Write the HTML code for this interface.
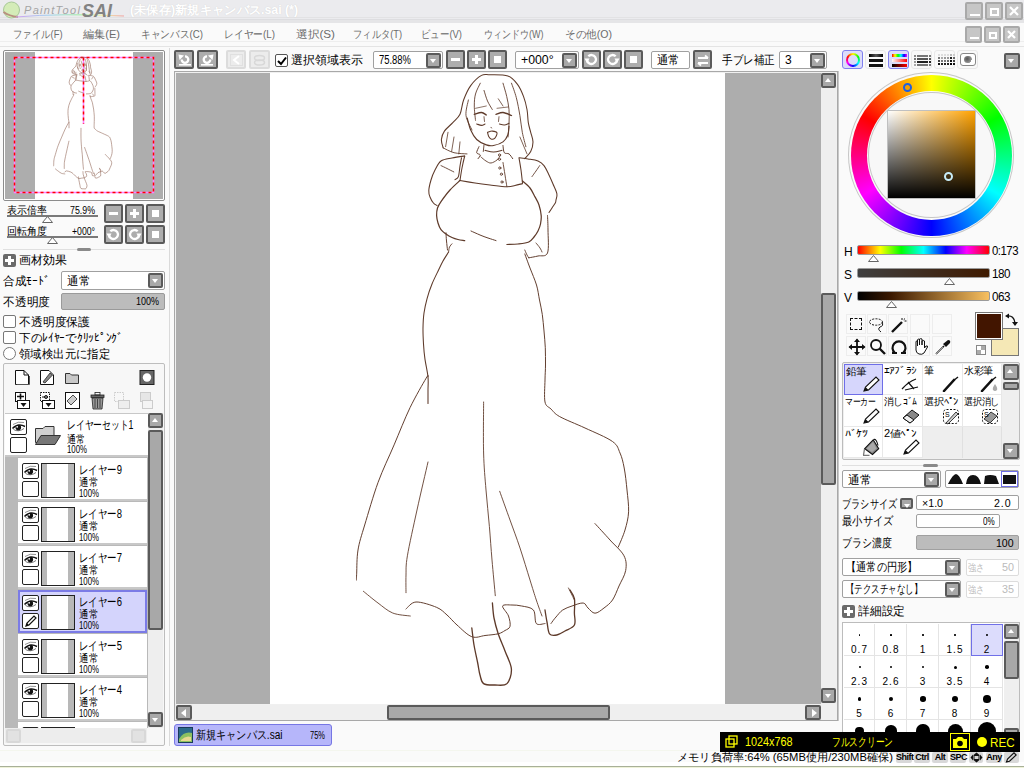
<!DOCTYPE html><html><head><meta charset="utf-8"><style>
*{box-sizing:border-box;margin:0;padding:0}
html,body{width:1024px;height:768px;overflow:hidden;background:#fafafa;font-family:"Liberation Sans",sans-serif;font-size:12px;color:#000}
.a{position:absolute}
.t{position:absolute;white-space:nowrap;line-height:1}
.wb{position:absolute;width:18px;height:18px;background:#c6c6c6;border:2px solid #a9a9a9;border-radius:2px}
.btn{position:absolute;width:19px;height:19px;background:#adadad;border:2px solid #5a5a5a;border-radius:2px}
.dbtn{position:absolute;width:20px;height:19px;background:#ececec;border:2px solid #dcdcdc;border-radius:2px}
.field{position:absolute;background:#fff;border:1px solid #a0a0a0;border-radius:2px}
.dd{position:absolute;width:15px;height:15px;background:#a8a8a8;border:2px solid #5a5a5a;border-radius:2px}
.dd:after{content:"";position:absolute;left:2px;top:4px;border-left:3.5px solid transparent;border-right:3.5px solid transparent;border-top:4px solid #fff}
.cb{position:absolute;width:13px;height:13px;background:#fff;border:1px solid #777;border-radius:2px}
.sb{position:absolute;width:15px;height:15px;background:#a8a8a8;border:2px solid #5a5a5a;border-radius:2px}
.up:after{content:"";position:absolute;left:2px;top:3px;border-left:3.5px solid transparent;border-right:3.5px solid transparent;border-bottom:4px solid #fff}
.dn:after{content:"";position:absolute;left:2px;top:4px;border-left:3.5px solid transparent;border-right:3.5px solid transparent;border-top:4px solid #fff}
.box{position:absolute;width:17px;height:16px;background:#fff;border:1px solid #222;border-radius:2px}
.thumb{position:absolute;width:34px;height:35px;background:#fff;border:1px solid #222}
.thumb:before{content:"";position:absolute;left:0;top:0;width:5px;height:33px;background:#b8b8b8}
.thumb:after{content:"";position:absolute;right:0;top:0;width:6px;height:33px;background:#b8b8b8}
.lrow{position:absolute;left:18px;width:129px;height:43px;background:#fff}
.s10{font-size:10px}
.s11{font-size:11px}
.plus{position:absolute;width:13px;height:13px;background:#6a6a6a;border-radius:2px}
.plus:before{content:"";position:absolute;left:5px;top:2px;width:3px;height:9px;background:#fff}
.plus:after{content:"";position:absolute;left:2px;top:5px;width:9px;height:3px;background:#fff}
</style></head><body><div class="a" style="left:0;top:0;width:1024px;height:23px;background:#ebebee"></div><div class="a" style="left:0;top:17px;width:1024px;height:1px;background:#e2e2e4"></div><div class="a" style="left:0;top:19px;width:1024px;height:4px;background:#e5e5e7;border-top:1px solid #dddde0"></div><svg class="a" style="left:0;top:0" width="130" height="22"><defs><linearGradient id="rb" x1="0" x2="1"><stop offset="0" stop-color="#d0a0f0"/><stop offset="0.3" stop-color="#a0d0f0"/><stop offset="0.6" stop-color="#a0f0a0"/><stop offset="0.8" stop-color="#f0f0a0"/><stop offset="1" stop-color="#f0a0a0"/></linearGradient></defs><circle cx="11.5" cy="10" r="8" fill="#d4ecb8" stroke="#a8c898" stroke-width="1"/><path d="M3.5 12 Q9 16 18 17" stroke="#b89080" stroke-width="2" fill="none"/><path d="M16 17 Q60 13 124 16" stroke="url(#rb)" stroke-width="1" fill="none"/></svg><div class="t" style="left:24px;top:5px;font-size:11px;color:#a4a4a4;font-style:italic;letter-spacing:1.3px">PaintTool</div><div class="t" style="left:82px;top:2px;font-size:18px;color:#828282;font-style:italic;font-weight:bold">SAI</div><div class="t" style="left:130px;top:4px;font-size:12px;color:#fff;font-weight:bold;text-shadow:0 0 1px #ccc;--tw:168;transform:scaleX(1.024);transform-origin:0 0">(未保存)新規キャンバス.sai (*)</div><div class="wb" style="left:965px;top:2px;width:18px;height:18px"><div class="a" style="left:3px;top:10px;width:10px;height:2px;background:#fff"></div></div><div class="wb" style="left:985px;top:2px;width:18px;height:18px"><div class="a" style="left:3px;top:4px;width:9px;height:8px;border:2px solid #fff"></div></div><div class="wb" style="left:1005px;top:2px;width:18px;height:18px"><svg class="a" style="left:1px;top:1px" width="12" height="12"><path d="M2 2 L10 10 M10 2 L2 10" stroke="#fff" stroke-width="2.2"/></svg></div><div class="a" style="left:0;top:23px;width:1024px;height:24px;background:#fafafa;border-bottom:1px solid #e4e4e4"></div><div class="a" style="left:0;top:41px;width:1024px;height:1px;background:#eeeeee"></div><div class="t" style="left:13px;top:29px;color:#6c6c6c;font-size:11px;--tw:49.5;transform:scaleX(0.853);transform-origin:0 0">ファイル(F)</div><div class="t" style="left:83px;top:29px;color:#6c6c6c;font-size:11px;--tw:37;transform:scaleX(1.009);transform-origin:0 0">編集(E)</div><div class="t" style="left:141px;top:29px;color:#6c6c6c;font-size:11px;--tw:62;transform:scaleX(0.882);transform-origin:0 0">キャンバス(C)</div><div class="t" style="left:224px;top:29px;color:#6c6c6c;font-size:11px;--tw:51;transform:scaleX(0.888);transform-origin:0 0">レイヤー(L)</div><div class="t" style="left:296px;top:29px;color:#6c6c6c;font-size:11px;--tw:39;transform:scaleX(1.063);transform-origin:0 0">選択(S)</div><div class="t" style="left:353px;top:29px;color:#6c6c6c;font-size:11px;--tw:49;transform:scaleX(0.844);transform-origin:0 0">フィルタ(T)</div><div class="t" style="left:421px;top:29px;color:#6c6c6c;font-size:11px;--tw:41;transform:scaleX(0.860);transform-origin:0 0">ビュー(V)</div><div class="t" style="left:484px;top:29px;color:#6c6c6c;font-size:11px;--tw:59.5;transform:scaleX(0.818);transform-origin:0 0">ウィンドウ(W)</div><div class="t" style="left:565px;top:29px;color:#6c6c6c;font-size:11px;--tw:47;transform:scaleX(0.961);transform-origin:0 0">その他(O)</div><div class="wb" style="left:965px;top:26px;width:17px;height:17px"><div class="a" style="left:3px;top:9px;width:9px;height:2px;background:#fff"></div></div><div class="wb" style="left:984px;top:26px;width:17px;height:17px"><div class="a" style="left:3px;top:4px;width:8px;height:7px;border:2px solid #fff"></div></div><div class="wb" style="left:1003px;top:26px;width:17px;height:17px"><svg class="a" style="left:1px;top:1px" width="11" height="11"><path d="M2 2 L9 9 M9 2 L2 9" stroke="#fff" stroke-width="2.2"/></svg></div><div class="a" style="left:169px;top:48px;width:1px;height:698px;background:#dadada"></div><div class="a" style="left:3px;top:50px;width:162px;height:151px;border:1px solid #8c8c8c;border-radius:2px;background:#fff"></div><div class="a" style="left:5px;top:52px;width:158px;height:147px;background:#adadad"></div><div class="a" style="left:35px;top:52px;width:98px;height:147px;background:#fff"></div><svg class="a" style="left:0;top:0" width="170" height="205"><g fill="none" stroke-width="1.5"><path d="M14.5 57.5 H153.5 V192.5 H14.5Z M83.5 57.5 V124" stroke="#ff80ff"/><path d="M14.5 57.5 H153.5 V192.5 H14.5Z M83.5 57.5 V124" stroke="#ff0000" stroke-dasharray="3 3"/></g></svg><svg class="a" style="left:4px;top:51px" width="160" height="149" ><g fill="none" stroke="#8a5a4a" stroke-width="0.6" opacity="0.9"><path d="M68.3 22.1 C68.2 21.8 67.9 20.9 67.9 20.3 C68.0 19.7 68.2 19.1 68.6 18.5 C69.0 17.9 69.8 17.3 70.4 16.7 C70.9 16.1 71.5 15.7 71.9 14.9 C72.3 14.1 72.3 12.8 72.7 11.8 C73.1 10.8 73.6 9.6 74.2 8.7 C74.9 7.8 75.9 6.9 76.6 6.5 C77.2 6.1 77.4 6.4 78.4 6.4 C79.3 6.4 81.2 6.3 82.2 6.6 C83.2 7.0 83.7 7.7 84.3 8.5 C84.9 9.2 85.3 10.1 85.6 11.0 C85.9 11.9 86.2 12.9 86.4 13.9 C86.5 14.8 86.5 15.9 86.6 16.7 C86.8 17.5 87.0 18.1 87.2 18.8 C87.3 19.5 87.6 20.2 87.6 20.8 C87.6 21.5 87.4 22.3 87.2 22.9 C86.9 23.5 86.1 24.2 85.9 24.5"/><path d="M69.3 18.8 L68.8 21.9"/><path d="M70.6 19.8 L70.1 22.9"/><path d="M71.9 20.8 L71.7 23.4"/><path d="M68.3 22.1 C68.7 22.3 69.8 23.0 70.6 23.2 C71.5 23.4 73.0 23.4 73.4 23.4"/><path d="M76.3 8.2 C76.1 8.6 75.5 9.7 75.3 10.5 C75.0 11.3 75.0 12.2 75.0 13.1 C75.0 14.1 75.2 15.7 75.3 16.2"/><path d="M73.7 11.8 C73.6 12.4 73.1 14.1 73.2 15.2 C73.3 16.2 74.3 17.8 74.5 18.3"/><path d="M77.1 9.7 C77.2 10.1 77.5 11.3 77.8 12.0 C78.1 12.7 78.7 13.6 78.9 13.9"/><path d="M81.2 8.2 C81.3 8.7 81.8 10.1 82.0 11.0 C82.2 12.0 82.4 12.9 82.5 13.9 C82.6 14.9 82.5 16.0 82.5 17.0 C82.4 18.0 82.3 19.3 82.3 19.8"/><path d="M83.0 8.2 C83.2 8.7 83.7 10.1 84.0 11.3 C84.4 12.5 84.6 13.9 84.8 15.2 C85.0 16.4 85.1 17.7 85.3 18.8 C85.6 19.9 86.0 21.4 86.1 21.9"/><path d="M80.2 11.6 L81.2 13.1"/><path d="M84.8 19.8 L86.4 23.4"/><path d="M73.5 15.7 C73.6 16.1 73.9 17.5 74.2 18.3 C74.6 19.0 75.0 19.8 75.5 20.3 C76.1 20.9 77.0 21.3 77.6 21.5 C78.2 21.7 78.5 21.7 79.1 21.6 C79.7 21.5 80.7 21.2 81.2 20.8 C81.7 20.5 82.0 19.8 82.2 19.3 C82.5 18.7 82.4 17.8 82.5 17.5"/><path d="M75.0 14.9 C75.3 14.8 76.1 14.5 76.6 14.5 C77.0 14.5 77.4 15.0 77.6 15.0"/><path d="M75.5 17.0 C75.7 17.0 76.3 17.3 76.6 17.3 C76.9 17.3 77.2 17.0 77.3 17.0"/><path d="M79.7 14.9 C79.9 14.8 80.6 14.5 81.2 14.5 C81.7 14.6 82.7 15.0 83.0 15.2"/><path d="M80.4 17.0 C80.6 17.0 81.1 17.2 81.5 17.2 C81.8 17.2 82.3 16.9 82.5 16.8"/><path d="M75.3 13.6 L77.6 13.1"/><path d="M79.9 13.6 L82.3 13.3"/><path d="M77.1 15.4 L77.2 16.4"/><path d="M80.3 15.4 L80.2 16.4"/><path d="M77.8 18.8 C78.0 18.7 78.5 18.5 78.9 18.5 C79.2 18.5 79.8 18.6 79.9 18.9 C80.0 19.2 79.6 19.8 79.4 20.1 C79.2 20.3 78.8 20.3 78.6 20.2 C78.4 20.2 78.2 19.9 78.1 19.7 C78.0 19.4 77.9 18.9 77.8 18.8"/><path d="M78.6 17.7 L78.7 17.8"/><path d="M77.1 21.5 L76.9 22.9"/><path d="M76.0 21.9 C75.9 22.1 75.5 22.9 75.5 23.2 C75.6 23.5 76.2 23.4 76.3 23.7 C76.3 23.9 75.9 24.3 75.8 24.5"/><path d="M77.3 22.6 C77.6 22.7 78.5 23.0 79.1 23.0 C79.7 23.0 80.7 22.7 81.0 22.6"/><path d="M81.2 21.6 C81.2 21.9 81.2 22.9 81.5 23.2 C81.7 23.5 82.2 23.2 82.5 23.4 C82.8 23.6 83.1 24.3 83.3 24.5"/><path d="M76.4 24.1 C76.6 24.2 77.2 24.7 77.5 25.0 C77.9 25.2 78.2 25.4 78.6 25.4 C79.0 25.3 79.6 25.0 79.9 24.7 C80.2 24.5 80.4 24.0 80.5 23.9"/><path d="M72.9 23.9 C72.5 23.9 71.1 24.1 70.2 24.3 C69.3 24.5 68.4 24.5 67.8 25.0 C67.2 25.4 66.9 26.2 66.5 26.9 C66.2 27.6 65.9 28.3 65.7 29.0 C65.5 29.8 65.2 30.7 65.2 31.3 C65.2 31.9 65.3 32.3 65.5 32.7 C65.6 33.2 65.9 33.7 66.2 34.0 C66.4 34.3 66.8 34.4 67.0 34.5"/><path d="M67.8 25.9 C68.0 26.0 68.7 26.3 69.1 26.6 C69.6 26.8 70.3 27.2 70.6 27.3"/><path d="M72.2 24.3 C72.2 24.6 72.0 25.4 71.9 26.0 C71.8 26.7 71.8 27.8 71.6 28.3 C71.4 28.8 71.0 28.9 70.8 29.0"/><path d="M72.9 23.9 C72.8 24.3 72.5 25.6 72.4 26.5 C72.2 27.3 72.0 28.7 71.9 29.2"/><path d="M71.9 29.2 C72.5 29.2 74.1 29.5 75.2 29.7 C76.2 29.9 77.2 30.0 78.4 30.1 C79.5 30.3 81.1 30.5 82.0 30.5 C82.9 30.5 83.2 30.3 83.8 30.2 C84.3 30.1 85.1 29.9 85.4 29.8"/><path d="M84.6 24.3 C84.7 24.7 84.9 26.0 85.1 26.9 C85.2 27.8 85.3 29.2 85.4 29.7"/><path d="M81.2 25.3 C81.3 25.7 81.5 27.1 81.6 28.0 C81.8 28.8 82.0 30.1 82.0 30.5"/><path d="M84.7 24.3 C85.0 24.3 85.9 24.4 86.6 24.5 C87.2 24.6 88.1 24.7 88.7 25.0 C89.3 25.2 89.6 25.4 90.0 25.9 C90.4 26.4 90.8 27.3 91.1 28.0 C91.4 28.6 91.7 29.2 92.0 29.9 C92.2 30.6 92.7 31.4 92.8 32.0 C92.9 32.6 92.7 33.0 92.6 33.4 C92.5 33.7 92.6 33.7 92.4 34.0 C92.3 34.3 92.0 34.7 91.7 35.1 C91.5 35.4 91.2 35.9 91.1 36.0"/><path d="M87.4 28.3 C87.6 28.1 88.0 27.5 88.3 27.1 C88.6 26.7 89.0 26.1 89.1 25.9"/><path d="M71.9 29.2 C71.6 29.5 70.5 30.4 69.8 31.2 C69.1 32.0 68.3 33.1 67.8 33.7 C67.4 34.3 67.2 34.6 67.1 35.1 C66.9 35.6 66.9 36.2 66.9 36.7 C66.9 37.3 67.0 37.8 67.2 38.3 C67.3 38.8 67.5 39.4 67.8 39.8 C68.1 40.1 68.5 40.4 68.9 40.7 C69.3 41.0 69.8 41.2 70.2 41.4 C70.6 41.6 71.0 41.8 71.5 41.9 C71.9 42.0 72.7 42.1 72.9 42.1"/><path d="M74.3 40.0 C74.6 40.2 75.6 40.6 76.2 40.9 C76.8 41.1 77.4 41.3 78.0 41.5 C78.5 41.7 79.4 42.0 79.7 42.1"/><path d="M85.4 29.3 C85.7 29.5 86.6 30.2 87.0 30.8 C87.4 31.3 87.8 32.1 88.1 32.7 C88.4 33.3 88.7 33.8 88.9 34.4 C89.2 35.1 89.4 36.0 89.4 36.7 C89.5 37.4 89.4 38.0 89.3 38.5 C89.1 39.1 89.0 39.6 88.7 40.0 C88.5 40.5 88.2 40.9 87.9 41.3 C87.5 41.7 87.3 42.1 86.7 42.4 C86.2 42.7 85.2 42.7 84.4 42.8 C83.6 42.9 82.4 42.9 82.0 42.9"/><path d="M68.9 40.4 C68.9 40.7 69.0 41.6 69.0 42.2 C69.1 42.8 69.2 43.8 69.2 44.1"/><path d="M70.2 42.8 C70.1 42.9 69.8 43.2 69.7 43.5 C69.5 43.8 69.5 44.4 69.5 44.6"/><path d="M90.8 36.7 C90.8 37.2 90.9 38.5 90.9 39.8 C90.9 41.2 91.1 43.8 90.8 44.8 C90.4 45.7 89.4 45.2 88.7 45.4 C88.0 45.6 87.1 45.7 86.7 45.8"/><path d="M88.3 42.6 C88.4 42.8 88.9 43.4 89.2 43.7 C89.4 44.0 89.5 44.4 89.6 44.6"/><path d="M85.9 44.1 C85.9 44.3 86.1 44.7 86.2 45.0 C86.4 45.3 86.6 45.7 86.7 45.8"/><path d="M69.5 44.6 C69.3 44.9 68.6 45.9 68.3 46.5 C67.9 47.1 67.8 47.5 67.4 48.3 C67.0 49.1 66.3 50.4 65.9 51.4 C65.5 52.5 65.1 53.6 64.8 54.6 C64.5 55.7 64.3 56.6 64.2 57.7 C64.0 58.7 64.0 59.8 64.0 60.9 C63.9 62.0 64.0 63.2 64.1 64.4 C64.1 65.5 64.2 66.5 64.4 67.7 C64.5 68.9 64.9 70.4 65.0 71.5 C65.1 72.6 65.0 73.3 65.0 74.3 C65.0 75.2 65.0 76.7 65.0 77.2"/><path d="M65.0 71.5 C65.0 71.5 65.3 70.6 64.6 71.7 C64.0 72.8 62.3 75.6 61.2 78.0 C60.0 80.4 58.9 83.4 57.7 86.1 C56.6 88.8 55.3 91.3 54.3 94.2 C53.2 97.0 52.1 100.9 51.4 103.4 C50.7 105.8 50.2 107.0 50.0 108.7 C49.7 110.5 49.7 112.6 49.7 113.7 C49.6 114.8 49.6 115.0 49.6 115.2"/><path d="M85.9 45.0 C86.1 45.5 86.6 46.9 87.0 48.0 C87.4 49.1 88.1 50.5 88.4 51.7 C88.7 52.8 88.8 53.8 89.0 54.9 C89.3 56.0 89.5 56.9 89.6 58.0 C89.8 59.1 89.9 60.4 90.0 61.6 C90.1 62.8 90.2 63.9 90.3 65.2 C90.3 66.4 90.3 67.7 90.3 68.9 C90.3 70.1 90.2 70.8 90.2 72.1 C90.2 73.5 90.0 75.8 90.2 76.9 C90.4 77.9 91.0 77.8 91.5 78.4 C92.1 78.9 92.2 79.3 93.4 80.0 C94.6 80.7 97.0 81.6 98.8 82.5 C100.7 83.4 103.5 84.5 104.8 85.4 C106.0 86.3 106.0 86.9 106.4 87.8 C106.8 88.8 107.0 89.7 107.3 91.1 C107.5 92.4 107.7 94.2 107.9 95.8 C108.1 97.4 108.3 99.1 108.2 100.5 C108.2 101.9 107.8 103.2 107.5 104.4 C107.1 105.7 106.3 107.5 106.0 108.1"/><path d="M65.0 89.8 C64.6 91.5 63.4 96.8 62.7 100.1 C61.9 103.5 61.0 107.7 60.6 110.0 C60.2 112.3 60.3 112.8 60.3 114.1 C60.2 115.4 60.3 117.3 60.3 117.9"/><path d="M77.0 76.9 C77.0 78.7 76.9 84.7 77.0 87.8 C77.1 91.0 77.3 93.2 77.5 95.8 C77.7 98.5 78.0 101.2 78.3 103.7 C78.5 106.2 78.6 108.4 78.8 110.9 C79.0 113.4 79.4 117.3 79.5 118.6"/><path d="M80.5 96.1 C80.8 97.1 82.0 100.2 82.7 102.3 C83.4 104.3 84.1 106.2 84.8 108.3 C85.6 110.5 86.4 113.3 87.0 115.2 C87.6 117.1 87.9 118.2 88.4 119.5 C88.8 120.8 89.4 122.4 89.6 123.0"/><path d="M101.0 103.1 C101.5 103.6 103.2 105.4 104.2 106.6 C105.3 107.7 106.7 108.9 107.2 110.0 C107.8 111.1 107.8 112.0 107.6 113.1 C107.4 114.2 106.6 115.4 106.2 116.5 C105.7 117.6 105.3 118.7 104.8 119.5 C104.2 120.3 103.6 120.8 102.9 121.2 C102.3 121.7 101.6 122.4 101.0 122.4 C100.4 122.4 99.9 121.6 99.5 121.2 C99.1 120.9 99.0 120.2 98.5 120.2 C97.9 120.1 96.8 120.5 96.0 120.8 C95.3 121.1 94.6 121.3 94.0 121.7 C93.5 122.1 93.0 122.7 92.6 123.2 C92.2 123.7 91.7 124.3 91.5 124.6"/><path d="M95.3 116.9 C95.4 117.2 95.8 118.0 96.0 118.4 C96.3 118.9 96.5 119.3 96.6 119.5"/><path d="M51.1 117.6 C51.6 118.1 53.2 119.4 54.3 120.2 C55.3 120.9 56.3 121.8 57.4 122.3 C58.6 122.8 60.6 122.8 61.2 123.0"/><path d="M60.3 121.4 C60.7 121.2 61.3 120.0 62.4 119.9 C63.5 119.9 65.8 120.6 66.9 121.1 C68.0 121.6 68.4 122.1 69.1 122.7 C69.9 123.4 70.4 124.1 71.3 124.9 C72.2 125.7 73.5 127.0 74.5 127.4 C75.5 127.8 76.4 127.3 77.3 127.2 C78.3 127.0 79.4 127.0 80.2 126.8 C80.9 126.6 81.2 126.3 81.6 126.1 C82.0 125.8 82.6 125.7 82.7 125.2 C82.8 124.7 82.6 123.7 82.4 123.0 C82.1 122.2 81.0 121.2 81.1 120.8 C81.2 120.4 82.4 120.6 83.1 120.6 C83.8 120.6 84.4 120.6 85.2 120.8 C86.0 121.0 87.2 121.0 87.7 121.7 C88.3 122.3 87.9 124.1 88.4 124.6 C88.8 125.1 89.9 124.6 90.2 124.6"/><path d="M74.5 125.5 C74.5 126.1 74.7 127.9 74.9 129.2 C75.2 130.5 75.5 132.0 75.7 133.1 C76.0 134.2 76.0 134.9 76.2 135.7 C76.4 136.4 76.5 137.2 77.0 137.5 C77.5 137.9 78.6 137.8 79.5 137.8 C80.3 137.8 81.5 138.1 82.0 137.5 C82.6 136.9 83.1 135.5 83.0 134.4 C82.9 133.2 82.1 131.8 81.6 130.5 C81.1 129.2 80.5 128.0 80.2 126.8 C79.8 125.6 79.5 124.5 79.2 123.4 C79.0 122.3 79.0 120.7 78.9 120.2"/><path d="M95.6 117.4 C95.8 117.7 96.4 118.4 96.6 119.2 C96.7 120.0 96.6 121.4 96.6 122.3 C96.6 123.3 96.9 124.2 96.6 124.9 C96.2 125.5 95.2 125.8 94.5 126.2 C93.9 126.5 93.3 126.9 92.8 127.0 C92.2 127.1 91.6 127.3 91.2 126.8 C90.8 126.3 90.8 125.1 90.7 124.2 C90.5 123.4 90.3 122.1 90.2 121.7"/></g></svg><div class="t" style="left:7px;top:205px;font-size:11px;--tw:40;transform:scaleX(0.909);transform-origin:0 0">表示倍率</div><div class="t" style="left:70px;top:205px;font-size:11px;--tw:25;transform:scaleX(0.801);transform-origin:0 0">75.9%</div><div class="a" style="left:7px;top:215px;width:91px;height:2px;background:#7a7a7a"></div><svg class="a" style="left:42px;top:216px" width="11" height="7"><path d="M0.5 6.5 L5.5 0.5 L10.5 6.5Z" fill="#fff" stroke="#666"/></svg><div class="t" style="left:7px;top:226px;font-size:11px;--tw:40;transform:scaleX(0.909);transform-origin:0 0">回転角度</div><div class="t" style="left:72px;top:226px;font-size:11px;--tw:23;transform:scaleX(0.788);transform-origin:0 0">+000°</div><div class="a" style="left:7px;top:236px;width:91px;height:2px;background:#7a7a7a"></div><svg class="a" style="left:47px;top:237px" width="11" height="7"><path d="M0.5 6.5 L5.5 0.5 L10.5 6.5Z" fill="#fff" stroke="#666"/></svg><div class="btn" style="left:104px;top:204px;width:19px;height:19px"><div class="a" style="left:3px;top:6px;width:9px;height:3px;background:#fff"></div></div><div class="btn" style="left:125px;top:204px;width:19px;height:19px"><div class="a" style="left:3px;top:6px;width:9px;height:3px;background:#fff"></div><div class="a" style="left:6px;top:3px;width:3px;height:9px;background:#fff"></div></div><div class="btn" style="left:146px;top:204px;width:19px;height:19px"><div class="a" style="left:4px;top:4px;width:7px;height:7px;background:#fff"></div></div><div class="btn" style="left:104px;top:225px;width:19px;height:19px"><svg class="a" style="left:0;top:0" width="15" height="15"><path d="M4.3 4.3 A4.5 4.5 0 1 1 3 8" fill="none" stroke="#fff" stroke-width="2.3"/><path d="M0.5 6.5 L5.5 6.5 L3 11Z" fill="#fff"/></svg></div><div class="btn" style="left:125px;top:225px;width:19px;height:19px"><svg class="a" style="left:0;top:0" width="15" height="15"><path d="M10.7 4.3 A4.5 4.5 0 1 0 12 8" fill="none" stroke="#fff" stroke-width="2.3"/><path d="M14.5 6.5 L9.5 6.5 L12 11Z" fill="#fff"/></svg></div><div class="btn" style="left:146px;top:225px;width:19px;height:19px"><div class="a" style="left:4px;top:4px;width:7px;height:7px;background:#fff"></div></div><div class="a" style="left:3px;top:249px;width:162px;height:1px;background:#e0e0e0"></div><div class="a" style="left:77px;top:248px;width:14px;height:3px;background:#8a8a8a;border-radius:2px"></div><div class="plus" style="left:3px;top:254px"></div><div class="t" style="left:19px;top:254px;font-size:12px;--tw:48;transform:scaleX(1.000);transform-origin:0 0">画材効果</div><div class="t" style="left:3px;top:275px;font-size:12px;--tw:46.5;transform:scaleX(0.969);transform-origin:0 0">合成ﾓｰﾄﾞ</div><div class="field" style="left:61px;top:271px;width:104px;height:19px"></div><div class="t" style="left:67px;top:275px;font-size:12px;--tw:23;transform:scaleX(0.958);transform-origin:0 0">通常</div><div class="dd" style="left:148px;top:273px"></div><div class="t" style="left:3px;top:296px;font-size:12px;--tw:47;transform:scaleX(0.979);transform-origin:0 0">不透明度</div><div class="field" style="left:61px;top:293px;width:104px;height:17px;background:#bcbcbc;border-color:#9a9a9a"></div><div class="t" style="left:136px;top:296px;font-size:11px;--tw:23;transform:scaleX(0.817);transform-origin:0 0">100%</div><div class="cb" style="left:3px;top:315px"></div><div class="t" style="left:19px;top:316px;font-size:12px;--tw:71;transform:scaleX(0.986);transform-origin:0 0">不透明度保護</div><div class="cb" style="left:3px;top:331px"></div><div class="t" style="left:19px;top:332px;font-size:12px;--tw:104;transform:scaleX(0.963);transform-origin:0 0">下のﾚｲﾔｰでｸﾘｯﾋﾟﾝｸﾞ</div><div class="cb" style="left:3px;top:347px;border-radius:7px"></div><div class="t" style="left:19px;top:348px;font-size:12px;--tw:91;transform:scaleX(0.948);transform-origin:0 0">領域検出元に指定</div><div class="a" style="left:3px;top:363px;width:162px;height:383px;border:1px solid #bdbdbd;background:#f7f7f7;border-radius:2px"></div><svg class="a" style="left:14px;top:369px" width="16" height="17"><path d="M1.5 1.5 H10 L14.5 6 V15.5 H1.5Z" fill="#fff" stroke="#111"/><path d="M10 1.5 V6 H14.5" fill="none" stroke="#111"/><path d="M2.5 15.5 H15.5 V7" stroke="#555" fill="none"/></svg><svg class="a" style="left:39px;top:369px" width="16" height="17"><path d="M1.5 1.5 H10 L14.5 6 V15.5 H1.5Z" fill="#fff" stroke="#111"/><path d="M4 13 L11 4 L13.5 6 L6 14Z" fill="#888" stroke="#222" stroke-width="0.8"/></svg><svg class="a" style="left:64px;top:369px" width="16" height="17"><path d="M1.5 4.5 H6 L7.5 6 H14.5 V14.5 H1.5Z" fill="#c8c8c8" stroke="#333"/></svg><svg class="a" style="left:139px;top:369px" width="16" height="17"><rect x="1" y="1.5" width="14" height="14" fill="#666" stroke="#222"/><circle cx="8" cy="8.5" r="4.2" fill="#fff"/></svg><svg class="a" style="left:14px;top:391px" width="17" height="19"><rect x="1.5" y="1.5" width="10" height="9" fill="#fff" stroke="#111"/><path d="M3 5.5 H10 M6.5 2.5 V8.5" stroke="#111" stroke-width="1.6"/><rect x="3.5" y="9.5" width="12" height="8" fill="#fff" stroke="#111"/><path d="M6.5 12 H12.5 L9.5 16Z" fill="#111"/></svg><svg class="a" style="left:39px;top:391px" width="17" height="19"><rect x="1.5" y="1.5" width="9" height="9" fill="#fff" stroke="#111" stroke-dasharray="1.5 1"/><path d="M3 6 H9" stroke="#111"/><circle cx="7" cy="6" r="1.5" fill="none" stroke="#111"/><rect x="3.5" y="9.5" width="12" height="8" fill="#fff" stroke="#111"/><path d="M6.5 12 H12.5 L9.5 16Z" fill="#111"/></svg><svg class="a" style="left:64px;top:391px" width="17" height="19"><rect x="1.5" y="1.5" width="14" height="16" fill="#fff" stroke="#111"/><path d="M3 10 L9 4 L13 8 L7 14Z" fill="#ccc" stroke="#222" stroke-width="0.8"/></svg><svg class="a" style="left:89px;top:391px" width="17" height="19"><rect x="2" y="4" width="13" height="2.5" fill="#666" stroke="#222" stroke-width="0.8"/><rect x="6" y="1.5" width="5" height="2.5" fill="none" stroke="#222" stroke-width="0.8"/><path d="M3 7 H14 L13 18 H4Z" fill="#999" stroke="#222" stroke-width="0.8"/><path d="M6 8 V17 M8.5 8 V17 M11 8 V17" stroke="#444"/></svg><svg class="a" style="left:113px;top:391px" width="18" height="19"><rect x="1.5" y="1.5" width="9" height="9" fill="none" stroke="#ccc" stroke-dasharray="1.5 1"/><rect x="5.5" y="9.5" width="11" height="8" fill="#eee" stroke="#ccc"/></svg><svg class="a" style="left:137px;top:391px" width="18" height="19"><rect x="3.5" y="1.5" width="10" height="9" fill="#e6e6e6" stroke="#ccc"/><rect x="5.5" y="9.5" width="10" height="8" fill="#f4f4f4" stroke="#ccc"/></svg><div class="a" style="left:5px;top:413px;width:143px;height:315px;background:#b9b9b9;overflow:hidden" id="llist"><div class="a" style="left:0;top:0;width:143px;height:44px;background:#fff;border-bottom:2px solid #c8c8c8;border-top:1px solid #c8c8c8"></div><div class="box" style="left:5px;top:6px"><svg width="15" height="14" viewBox="0 0 15 14" style="position:absolute;left:0;top:0"><path d="M2 4.5 Q7 1 13 2.5" fill="none" stroke="#777" stroke-width="0.8"/><path d="M1.5 8.5 Q7 2.8 14 6.5" fill="none" stroke="#111" stroke-width="1.5"/><path d="M2.5 9.5 Q7.5 12.5 13 8.5" fill="none" stroke="#555" stroke-width="0.8"/><circle cx="7.3" cy="7.6" r="2.8" fill="#111"/><circle cx="6.2" cy="6.8" r="0.9" fill="#fff"/></svg></div><div class="box" style="left:5px;top:24px"></div><svg class="a" style="left:29px;top:12px" width="28" height="21"><path d="M1.5 3.5 H9 L11 1.5 H20 V17.5 H1.5Z" fill="#d0d0d0" stroke="#333"/><path d="M1.5 19.5 L7 10.5 H26.5 L21 19.5Z" fill="#777" stroke="#333"/></svg><div class="t" style="left:62px;top:6px;font-size:12px;--tw:66.5;transform:scaleX(0.733);transform-origin:0 0">レイヤーセット1</div><div class="t" style="left:62px;top:21px;font-size:11px;--tw:18;transform:scaleX(0.818);transform-origin:0 0">通常</div><div class="t" style="left:62px;top:32px;font-size:10px;--tw:20;transform:scaleX(0.782);transform-origin:0 0">100%</div><div class="a" style="left:13px;top:45px;width:129px;height:43px;background:#fff;border-bottom:2px solid #c8c8c8"></div><div class="box" style="left:17px;top:50px"><svg width="15" height="14" viewBox="0 0 15 14" style="position:absolute;left:0;top:0"><path d="M2 4.5 Q7 1 13 2.5" fill="none" stroke="#777" stroke-width="0.8"/><path d="M1.5 8.5 Q7 2.8 14 6.5" fill="none" stroke="#111" stroke-width="1.5"/><path d="M2.5 9.5 Q7.5 12.5 13 8.5" fill="none" stroke="#555" stroke-width="0.8"/><circle cx="7.3" cy="7.6" r="2.8" fill="#111"/><circle cx="6.2" cy="6.8" r="0.9" fill="#fff"/></svg></div><div class="box" style="left:17px;top:68px"></div><div class="thumb" style="left:36px;top:50px"></div><div class="t" style="left:74px;top:51px;font-size:12px;--tw:43;transform:scaleX(0.786);transform-origin:0 0">レイヤー9</div><div class="t" style="left:74px;top:64px;font-size:11px;--tw:19;transform:scaleX(0.864);transform-origin:0 0">通常</div><div class="t" style="left:74px;top:76px;font-size:10px;--tw:20;transform:scaleX(0.782);transform-origin:0 0">100%</div><div class="a" style="left:13px;top:89px;width:129px;height:43px;background:#fff;border-bottom:2px solid #c8c8c8"></div><div class="box" style="left:17px;top:94px"><svg width="15" height="14" viewBox="0 0 15 14" style="position:absolute;left:0;top:0"><path d="M2 4.5 Q7 1 13 2.5" fill="none" stroke="#777" stroke-width="0.8"/><path d="M1.5 8.5 Q7 2.8 14 6.5" fill="none" stroke="#111" stroke-width="1.5"/><path d="M2.5 9.5 Q7.5 12.5 13 8.5" fill="none" stroke="#555" stroke-width="0.8"/><circle cx="7.3" cy="7.6" r="2.8" fill="#111"/><circle cx="6.2" cy="6.8" r="0.9" fill="#fff"/></svg></div><div class="box" style="left:17px;top:112px"></div><div class="thumb" style="left:36px;top:94px"></div><div class="t" style="left:74px;top:95px;font-size:12px;--tw:43;transform:scaleX(0.786);transform-origin:0 0">レイヤー8</div><div class="t" style="left:74px;top:108px;font-size:11px;--tw:19;transform:scaleX(0.864);transform-origin:0 0">通常</div><div class="t" style="left:74px;top:120px;font-size:10px;--tw:20;transform:scaleX(0.782);transform-origin:0 0">100%</div><div class="a" style="left:13px;top:133px;width:129px;height:43px;background:#fff;border-bottom:2px solid #c8c8c8"></div><div class="box" style="left:17px;top:138px"><svg width="15" height="14" viewBox="0 0 15 14" style="position:absolute;left:0;top:0"><path d="M2 4.5 Q7 1 13 2.5" fill="none" stroke="#777" stroke-width="0.8"/><path d="M1.5 8.5 Q7 2.8 14 6.5" fill="none" stroke="#111" stroke-width="1.5"/><path d="M2.5 9.5 Q7.5 12.5 13 8.5" fill="none" stroke="#555" stroke-width="0.8"/><circle cx="7.3" cy="7.6" r="2.8" fill="#111"/><circle cx="6.2" cy="6.8" r="0.9" fill="#fff"/></svg></div><div class="box" style="left:17px;top:156px"></div><div class="thumb" style="left:36px;top:138px"></div><div class="t" style="left:74px;top:139px;font-size:12px;--tw:43;transform:scaleX(0.786);transform-origin:0 0">レイヤー7</div><div class="t" style="left:74px;top:152px;font-size:11px;--tw:19;transform:scaleX(0.864);transform-origin:0 0">通常</div><div class="t" style="left:74px;top:164px;font-size:10px;--tw:20;transform:scaleX(0.782);transform-origin:0 0">100%</div><div class="a" style="left:13px;top:177px;width:129px;height:43px;background:#d4d4fc;border:2px solid #7b7be6;border-bottom:2px solid #7b7be6"></div><div class="box" style="left:17px;top:182px"><svg width="15" height="14" viewBox="0 0 15 14" style="position:absolute;left:0;top:0"><path d="M2 4.5 Q7 1 13 2.5" fill="none" stroke="#777" stroke-width="0.8"/><path d="M1.5 8.5 Q7 2.8 14 6.5" fill="none" stroke="#111" stroke-width="1.5"/><path d="M2.5 9.5 Q7.5 12.5 13 8.5" fill="none" stroke="#555" stroke-width="0.8"/><circle cx="7.3" cy="7.6" r="2.8" fill="#111"/><circle cx="6.2" cy="6.8" r="0.9" fill="#fff"/></svg></div><div class="box" style="left:17px;top:200px"><svg class="a" style="left:1px;top:1px" width="13" height="12"><path d="M2 11 L3 8 L10 1 L12 3 L5 10Z" fill="#fff" stroke="#111" stroke-width="1.2"/><path d="M2 11 L3 8 L5 10Z" fill="#111"/></svg></div><div class="thumb" style="left:36px;top:182px"></div><div class="t" style="left:74px;top:183px;font-size:12px;--tw:43;transform:scaleX(0.786);transform-origin:0 0">レイヤー6</div><div class="t" style="left:74px;top:196px;font-size:11px;--tw:19;transform:scaleX(0.864);transform-origin:0 0">通常</div><div class="t" style="left:74px;top:208px;font-size:10px;--tw:20;transform:scaleX(0.782);transform-origin:0 0">100%</div><div class="a" style="left:13px;top:221px;width:129px;height:43px;background:#fff;border-bottom:2px solid #c8c8c8"></div><div class="box" style="left:17px;top:226px"><svg width="15" height="14" viewBox="0 0 15 14" style="position:absolute;left:0;top:0"><path d="M2 4.5 Q7 1 13 2.5" fill="none" stroke="#777" stroke-width="0.8"/><path d="M1.5 8.5 Q7 2.8 14 6.5" fill="none" stroke="#111" stroke-width="1.5"/><path d="M2.5 9.5 Q7.5 12.5 13 8.5" fill="none" stroke="#555" stroke-width="0.8"/><circle cx="7.3" cy="7.6" r="2.8" fill="#111"/><circle cx="6.2" cy="6.8" r="0.9" fill="#fff"/></svg></div><div class="box" style="left:17px;top:244px"></div><div class="thumb" style="left:36px;top:226px"></div><div class="t" style="left:74px;top:227px;font-size:12px;--tw:43;transform:scaleX(0.786);transform-origin:0 0">レイヤー5</div><div class="t" style="left:74px;top:240px;font-size:11px;--tw:19;transform:scaleX(0.864);transform-origin:0 0">通常</div><div class="t" style="left:74px;top:252px;font-size:10px;--tw:20;transform:scaleX(0.782);transform-origin:0 0">100%</div><div class="a" style="left:13px;top:265px;width:129px;height:43px;background:#fff;border-bottom:2px solid #c8c8c8"></div><div class="box" style="left:17px;top:270px"><svg width="15" height="14" viewBox="0 0 15 14" style="position:absolute;left:0;top:0"><path d="M2 4.5 Q7 1 13 2.5" fill="none" stroke="#777" stroke-width="0.8"/><path d="M1.5 8.5 Q7 2.8 14 6.5" fill="none" stroke="#111" stroke-width="1.5"/><path d="M2.5 9.5 Q7.5 12.5 13 8.5" fill="none" stroke="#555" stroke-width="0.8"/><circle cx="7.3" cy="7.6" r="2.8" fill="#111"/><circle cx="6.2" cy="6.8" r="0.9" fill="#fff"/></svg></div><div class="box" style="left:17px;top:288px"></div><div class="thumb" style="left:36px;top:270px"></div><div class="t" style="left:74px;top:271px;font-size:12px;--tw:43;transform:scaleX(0.786);transform-origin:0 0">レイヤー4</div><div class="t" style="left:74px;top:284px;font-size:11px;--tw:19;transform:scaleX(0.864);transform-origin:0 0">通常</div><div class="t" style="left:74px;top:296px;font-size:10px;--tw:20;transform:scaleX(0.782);transform-origin:0 0">100%</div><div class="a" style="left:13px;top:309px;width:129px;height:43px;background:#fff;border-bottom:2px solid #c8c8c8"></div><div class="box" style="left:17px;top:314px"><svg width="15" height="14" viewBox="0 0 15 14" style="position:absolute;left:0;top:0"><path d="M2 4.5 Q7 1 13 2.5" fill="none" stroke="#777" stroke-width="0.8"/><path d="M1.5 8.5 Q7 2.8 14 6.5" fill="none" stroke="#111" stroke-width="1.5"/><path d="M2.5 9.5 Q7.5 12.5 13 8.5" fill="none" stroke="#555" stroke-width="0.8"/><circle cx="7.3" cy="7.6" r="2.8" fill="#111"/><circle cx="6.2" cy="6.8" r="0.9" fill="#fff"/></svg></div><div class="box" style="left:17px;top:332px"></div><div class="thumb" style="left:36px;top:314px"></div><div class="t" style="left:74px;top:315px;font-size:12px;--tw:43;transform:scaleX(0.786);transform-origin:0 0">レイヤー3</div><div class="t" style="left:74px;top:328px;font-size:11px;--tw:19;transform:scaleX(0.864);transform-origin:0 0">通常</div><div class="t" style="left:74px;top:340px;font-size:10px;--tw:20;transform:scaleX(0.782);transform-origin:0 0">100%</div></div><div class="a" style="left:148px;top:413px;width:15px;height:315px;background:#eeeeee"></div><div class="sb up" style="left:148px;top:413px"></div><div class="a" style="left:148px;top:430px;width:15px;height:200px;background:#a8a8a8;border:2px solid #5a5a5a;border-radius:2px"></div><div class="sb dn" style="left:148px;top:712px"></div><div class="a" style="left:5px;top:728px;width:142px;height:15px;background:#ededed"></div><div class="a" style="left:6px;top:729px;width:15px;height:14px;background:#e2e2e2;border:2px solid #d8d8d8;border-radius:2px"></div><div class="a" style="left:131px;top:729px;width:15px;height:14px;background:#e2e2e2;border:2px solid #d8d8d8;border-radius:2px"></div><div class="btn" style="left:174px;top:50px;width:20px;height:19px"><svg class="a" style="left:1px;top:1px" width="15" height="14"><path d="M8 3.3 A3.3 3.3 0 1 1 4.7 6.6" fill="none" stroke="#fff" stroke-width="2.3"/><path d="M1.5 1.5 L7 2.5 L2.5 7Z" fill="#fff"/><rect x="2" y="11" width="12" height="1.6" fill="#fff"/></svg></div><div class="btn" style="left:197px;top:50px;width:21px;height:19px"><svg class="a" style="left:1px;top:1px" width="15" height="14"><path d="M7 3.3 A3.3 3.3 0 1 0 10.3 6.6" fill="none" stroke="#fff" stroke-width="2.3"/><path d="M13.5 1.5 L8 2.5 L12.5 7Z" fill="#fff"/><rect x="1" y="11" width="12" height="1.6" fill="#fff"/></svg></div><div class="dbtn" style="left:226px;top:50px"><svg class="a" style="left:1px;top:1px" width="15" height="14"><rect x="1.5" y="1.5" width="12" height="11" fill="none" stroke="#d4d4d4" stroke-dasharray="1 1"/><path d="M10 3 L5 7 L10 11" fill="none" stroke="#fff" stroke-width="2"/></svg></div><div class="dbtn" style="left:249px;top:50px;width:21px"><svg class="a" style="left:1px;top:1px" width="15" height="14"><ellipse cx="7.5" cy="5" rx="5" ry="2.5" fill="none" stroke="#d8d8d8" stroke-width="1.5"/><ellipse cx="7.5" cy="9.5" rx="5" ry="2.5" fill="none" stroke="#d8d8d8" stroke-width="1.5"/></svg></div><div class="cb" style="left:275px;top:54px;width:13px;height:13px;border-color:#555"><svg class="a" style="left:1px;top:1px" width="10" height="10"><path d="M1 5 L4 8 L9 1.5" fill="none" stroke="#000" stroke-width="2"/></svg></div><div class="t" style="left:291px;top:54px;font-size:12px;--tw:71.5;transform:scaleX(0.993);transform-origin:0 0">選択領域表示</div><div class="field" style="left:373px;top:51px;width:70px;height:18px"></div><div class="t" style="left:379px;top:54px;font-size:12px;--tw:32;transform:scaleX(0.786);transform-origin:0 0">75.88%</div><div class="dd" style="left:426px;top:53px"></div><div class="btn" style="left:446px;top:50px;width:19px;height:19px"><div class="a" style="left:3px;top:6px;width:9px;height:3px;background:#fff"></div></div><div class="btn" style="left:467px;top:50px;width:19px;height:19px"><div class="a" style="left:3px;top:6px;width:9px;height:3px;background:#fff"></div><div class="a" style="left:6px;top:3px;width:3px;height:9px;background:#fff"></div></div><div class="btn" style="left:488px;top:50px;width:19px;height:19px"><div class="a" style="left:4px;top:4px;width:7px;height:7px;background:#fff"></div></div><div class="field" style="left:515px;top:51px;width:64px;height:18px"></div><div class="t" style="left:521px;top:54px;font-size:12px;--tw:32.6;transform:scaleX(1.024);transform-origin:0 0">+000°</div><div class="dd" style="left:562px;top:53px"></div><div class="btn" style="left:582px;top:50px;width:19px;height:19px"><svg class="a" style="left:0;top:0" width="15" height="15"><path d="M4.3 4.3 A4.5 4.5 0 1 1 3 8" fill="none" stroke="#fff" stroke-width="2.3"/><path d="M0.5 6.5 L5.5 6.5 L3 11Z" fill="#fff"/></svg></div><div class="btn" style="left:603px;top:50px;width:19px;height:19px"><svg class="a" style="left:0;top:0" width="15" height="15"><path d="M10.7 4.3 A4.5 4.5 0 1 0 12 8" fill="none" stroke="#fff" stroke-width="2.3"/><path d="M14.5 6.5 L9.5 6.5 L12 11Z" fill="#fff"/></svg></div><div class="btn" style="left:624px;top:50px;width:19px;height:19px"><div class="a" style="left:4px;top:4px;width:7px;height:7px;background:#fff"></div></div><div class="field" style="left:651px;top:51px;width:39px;height:18px"></div><div class="t" style="left:657px;top:54px;font-size:12px;--tw:22.6;transform:scaleX(0.942);transform-origin:0 0">通常</div><div class="btn" style="left:693px;top:50px;width:19px;height:19px"><svg class="a" style="left:1px;top:1px" width="14" height="14"><path d="M2 5 H12 M9 2.5 L12 5 M12 10 H2 M5 12.5 L2 10" fill="none" stroke="#fff" stroke-width="1.8"/></svg></div><div class="t" style="left:722px;top:54px;font-size:12px;--tw:52.5;transform:scaleX(0.875);transform-origin:0 0">手ブレ補正</div><div class="field" style="left:779px;top:51px;width:48px;height:18px"></div><div class="t" style="left:785px;top:54px;font-size:12px">3</div><div class="dd" style="left:810px;top:53px"></div><div class="a" style="left:174px;top:71px;width:664px;height:650px;border:1px solid #a8a8a8;background:#f0f0f0"></div><div class="a" style="left:176px;top:73px;width:645px;height:631px;background:#adadad"></div><div class="a" style="left:270px;top:73px;width:455px;height:631px;background:#fff"></div><svg class="a" style="left:270px;top:73px" width="455" height="631" viewBox="270 73 455 631"><g fill="none" stroke="#56301f" stroke-linecap="round" stroke-linejoin="round" opacity="0.95"><circle cx="499.5" cy="155" r="1.1" stroke-width="0.9"/><circle cx="499.5" cy="159.3" r="1.1" stroke-width="0.9"/><circle cx="499.8" cy="168" r="1.1" stroke-width="0.9"/><circle cx="501.4" cy="174.2" r="1.1" stroke-width="0.9"/><circle cx="502" cy="182" r="1.1" stroke-width="0.9"/><path d="M443.2 147.9 C442.9 146.5 441.2 142.3 441.4 139.5 C441.6 136.7 442.5 133.9 444.4 131.1 C446.3 128.3 450.2 125.5 452.8 122.7 C455.4 119.9 458.2 118.1 460.0 114.3 C461.8 110.5 461.8 104.8 463.6 100.0 C465.4 95.2 467.7 89.7 470.7 85.6 C473.7 81.5 478.3 77.2 481.5 75.4 C484.7 73.6 485.5 74.7 489.9 74.8 C494.3 74.9 503.3 74.4 507.9 76.0 C512.5 77.6 514.9 81.0 517.5 84.4 C520.1 87.8 521.9 92.2 523.5 96.4 C525.1 100.6 526.2 105.1 527.0 109.5 C527.8 113.9 527.7 118.9 528.3 122.7 C528.9 126.5 529.9 129.1 530.7 132.3 C531.5 135.5 533.0 138.7 533.0 141.9 C533.0 145.1 532.1 148.7 530.7 151.5 C529.3 154.3 525.7 157.5 524.7 158.7" stroke-width="1.06"/><path d="M448.0 132.3 L445.6 146.7" stroke-width="0.79"/><path d="M454.0 137.0 L451.6 151.5" stroke-width="0.79"/><path d="M460.0 141.9 L458.8 153.9" stroke-width="0.79"/><path d="M443.2 147.9 C445.0 148.7 450.0 151.7 454.0 152.7 C458.0 153.7 464.8 153.7 467.0 153.9" stroke-width="0.88"/><path d="M480.3 83.2 C479.5 85.0 476.5 90.2 475.5 94.0 C474.5 97.8 474.3 101.6 474.3 106.0 C474.3 110.4 475.3 117.9 475.5 120.3" stroke-width="0.88"/><path d="M468.4 100.0 C468.0 102.6 465.4 110.5 466.0 115.5 C466.6 120.5 471.0 127.6 472.0 130.0" stroke-width="0.88"/><path d="M484.0 90.4 C484.6 92.2 486.1 97.8 487.5 101.0 C488.9 104.2 491.5 108.1 492.3 109.5" stroke-width="0.88"/><path d="M503.0 83.2 C503.6 85.4 505.7 92.0 506.7 96.4 C507.7 100.8 508.6 104.9 509.0 109.5 C509.4 114.1 509.2 119.4 509.0 124.0 C508.8 128.6 508.2 134.8 508.0 137.0" stroke-width="0.88"/><path d="M511.5 83.2 C512.3 85.6 514.9 92.2 516.3 97.6 C517.7 103.0 518.9 109.7 519.9 115.5 C520.9 121.3 521.3 127.1 522.3 132.3 C523.3 137.5 525.3 144.3 525.9 146.7" stroke-width="0.88"/><path d="M498.3 98.8 L503.0 106.0" stroke-width="0.79"/><path d="M519.9 137.0 L527.0 153.9" stroke-width="0.79"/><path d="M467.2 118.0 C467.8 120.0 469.1 126.4 470.7 130.0 C472.3 133.6 474.1 137.0 476.7 139.5 C479.3 142.0 483.5 143.9 486.3 144.9 C489.1 145.9 490.7 146.0 493.5 145.5 C496.3 145.0 500.6 143.7 503.0 141.9 C505.4 140.1 506.9 137.3 507.9 134.7 C508.9 132.1 508.8 127.7 509.0 126.3" stroke-width="1.14"/><path d="M474.3 114.3 C475.5 114.0 479.5 112.4 481.5 112.5 C483.5 112.6 485.5 114.6 486.3 115.0" stroke-width="1.32"/><path d="M476.7 124.0 C477.5 124.2 480.1 125.4 481.5 125.4 C482.9 125.4 484.4 124.2 485.0 124.0" stroke-width="1.14"/><path d="M496.0 114.3 C497.2 114.0 500.4 112.3 503.0 112.5 C505.6 112.7 510.1 115.0 511.5 115.5" stroke-width="1.32"/><path d="M499.5 124.0 C500.3 124.2 502.7 125.1 504.3 125.0 C505.9 124.9 508.2 123.6 509.0 123.3" stroke-width="1.14"/><path d="M475.5 108.3 L486.3 106.0" stroke-width="0.70"/><path d="M497.0 108.3 L508.0 107.0" stroke-width="0.70"/><path d="M484.0 116.7 L484.5 121.5" stroke-width="0.79"/><path d="M499.0 116.7 L498.5 121.5" stroke-width="0.79"/><path d="M487.5 132.3 C488.3 132.1 490.7 131.0 492.3 131.1 C493.9 131.2 496.6 131.7 497.0 132.9 C497.4 134.1 495.7 137.3 494.7 138.3 C493.7 139.3 492.0 139.3 491.0 139.0 C490.0 138.7 489.3 137.6 488.7 136.5 C488.1 135.4 487.7 133.0 487.5 132.3" stroke-width="1.06"/><path d="M491.0 127.3 L491.5 128.0" stroke-width="0.88"/><path d="M484.0 144.9 L483.3 151.5" stroke-width="0.88"/><path d="M479.0 146.7 C478.6 147.7 476.5 151.3 476.7 152.7 C476.9 154.1 480.1 154.0 480.3 155.0 C480.5 156.0 478.4 158.1 478.0 158.7" stroke-width="0.97"/><path d="M485.0 150.3 C486.4 150.6 490.7 152.0 493.5 152.0 C496.3 152.0 500.6 150.6 502.0 150.3" stroke-width="1.06"/><path d="M503.0 145.5 C503.2 146.7 503.3 151.3 504.3 152.7 C505.3 154.1 507.6 152.9 509.0 153.9 C510.4 154.9 512.1 157.9 512.7 158.7" stroke-width="0.97"/><path d="M481.0 157.0 C481.8 157.7 484.3 160.0 486.0 161.0 C487.7 162.0 489.2 163.2 491.0 163.0 C492.8 162.8 495.5 161.2 497.0 160.0 C498.5 158.8 499.5 156.7 500.0 156.0" stroke-width="0.88"/><path d="M464.7 156.0 C462.6 156.3 455.9 157.2 452.0 158.0 C448.1 158.8 443.8 159.0 441.0 161.0 C438.2 163.0 436.7 166.8 435.0 170.0 C433.3 173.2 432.0 176.6 431.0 180.0 C430.0 183.4 428.9 187.8 428.8 190.6 C428.6 193.4 429.2 194.9 430.0 197.0 C430.8 199.1 432.2 201.6 433.4 203.0 C434.6 204.4 436.4 205.1 437.0 205.5" stroke-width="1.06"/><path d="M441.0 165.6 C442.0 166.1 444.9 167.4 447.0 168.5 C449.1 169.6 452.6 171.3 453.8 171.9" stroke-width="0.88"/><path d="M461.5 157.8 C461.2 159.2 460.5 162.9 460.0 166.0 C459.5 169.1 459.2 174.3 458.4 176.6 C457.6 178.9 455.6 179.2 455.0 179.7" stroke-width="1.06"/><path d="M464.7 156.0 C464.2 158.0 462.8 163.9 462.0 168.0 C461.2 172.1 460.3 178.4 460.0 180.5" stroke-width="1.06"/><path d="M460.0 180.5 C462.5 180.9 470.0 182.2 475.0 183.0 C480.0 183.8 484.7 184.4 490.0 185.0 C495.3 185.6 502.7 186.6 506.9 186.7 C511.1 186.8 512.4 186.0 515.0 185.5 C517.6 185.0 521.2 183.9 522.5 183.6" stroke-width="1.14"/><path d="M519.0 157.8 C519.3 159.8 520.4 165.8 521.0 170.0 C521.6 174.2 522.2 180.8 522.5 183.0" stroke-width="1.06"/><path d="M503.0 162.5 C503.3 164.6 504.4 171.0 505.0 175.0 C505.6 179.0 506.6 184.8 506.9 186.7" stroke-width="0.88"/><path d="M519.4 157.8 C520.8 158.0 524.9 158.5 528.0 159.0 C531.1 159.5 535.3 159.9 538.0 161.0 C540.7 162.1 542.2 163.3 544.0 165.6 C545.8 167.9 547.5 171.9 549.0 175.0 C550.5 178.1 551.7 180.9 553.0 184.0 C554.3 187.1 556.4 191.1 556.9 193.8 C557.4 196.4 556.3 198.5 556.0 200.0 C555.7 201.5 556.0 201.7 555.3 203.0 C554.6 204.3 553.0 206.4 552.0 208.0 C551.0 209.6 549.5 211.8 549.0 212.5" stroke-width="1.06"/><path d="M532.0 176.6 C532.7 175.7 534.7 172.8 536.0 171.0 C537.3 169.2 539.1 166.5 539.7 165.6" stroke-width="0.88"/><path d="M460.0 180.5 C458.3 182.1 453.2 186.5 450.0 190.0 C446.8 193.5 443.1 198.6 441.0 201.6 C438.9 204.6 438.2 205.7 437.5 208.0 C436.8 210.3 436.5 213.1 436.6 215.6 C436.7 218.1 437.3 220.7 438.0 223.0 C438.7 225.3 439.7 227.9 441.0 229.7 C442.3 231.5 444.2 232.7 446.0 234.0 C447.8 235.3 450.0 236.6 452.0 237.5 C454.0 238.4 455.9 239.0 458.0 239.5 C460.1 240.0 463.6 240.4 464.7 240.6" stroke-width="1.23"/><path d="M471.0 231.0 C472.5 231.7 477.2 233.8 480.0 235.0 C482.8 236.2 485.3 237.1 488.0 238.0 C490.7 238.9 494.7 240.2 496.0 240.6" stroke-width="0.97"/><path d="M522.5 181.0 C523.8 182.2 527.9 185.3 530.0 188.0 C532.1 190.7 533.5 194.1 535.0 196.9 C536.5 199.7 538.0 201.9 539.0 205.0 C540.0 208.1 541.0 212.4 541.2 215.6 C541.5 218.8 541.0 221.4 540.5 224.0 C540.0 226.6 539.1 228.8 538.0 231.0 C536.9 233.2 535.5 235.2 534.0 237.0 C532.5 238.8 531.4 240.8 528.8 242.0 C526.1 243.2 521.6 243.6 518.0 244.0 C514.4 244.4 508.8 244.4 506.9 244.5" stroke-width="1.23"/><path d="M446.0 232.8 C446.1 234.2 446.2 238.1 446.5 241.0 C446.8 243.9 447.3 248.5 447.5 250.0" stroke-width="0.97"/><path d="M452.0 243.8 C451.6 244.3 450.1 245.6 449.5 247.0 C448.9 248.4 448.8 251.2 448.6 252.0" stroke-width="0.88"/><path d="M547.5 215.6 C547.6 218.0 548.0 223.8 548.0 230.0 C548.0 236.2 549.2 248.7 547.5 253.0 C545.8 257.3 541.1 255.2 538.0 256.0 C534.9 256.8 530.3 257.5 528.8 257.8" stroke-width="0.97"/><path d="M536.0 243.0 C536.7 243.8 539.0 246.5 540.0 248.0 C541.0 249.5 541.7 251.3 542.0 252.0" stroke-width="0.88"/><path d="M524.8 250.0 C525.1 250.7 525.9 252.7 526.5 254.0 C527.1 255.3 528.3 257.2 528.7 257.8" stroke-width="0.88"/><path d="M448.6 252.0 C447.7 253.5 444.6 258.1 443.0 261.0 C441.4 263.9 440.6 265.7 438.8 269.5 C437.0 273.3 434.0 279.1 432.0 284.0 C430.0 288.9 428.3 294.0 427.0 298.8 C425.7 303.6 424.7 308.1 424.0 313.0 C423.3 317.9 423.1 322.8 423.0 328.0 C422.9 333.2 423.2 338.8 423.5 344.0 C423.8 349.2 424.2 353.9 425.0 359.4 C425.8 364.9 427.5 371.9 428.0 377.0 C428.5 382.1 428.0 385.6 428.0 390.0 C428.0 394.4 428.0 401.2 428.0 403.4" stroke-width="1.06"/><path d="M428.0 377.0 C427.7 377.2 429.2 373.0 426.2 378.1 C423.2 383.2 415.5 396.4 410.1 407.5 C404.8 418.6 399.4 432.4 394.1 444.9 C388.8 457.4 383.0 468.9 378.1 482.3 C373.2 495.7 368.1 513.7 364.7 525.0 C361.3 536.3 359.3 542.0 358.0 550.0 C356.7 558.0 356.9 568.1 356.7 573.1 C356.4 578.1 356.5 578.9 356.5 580.0" stroke-width="0.97"/><path d="M524.8 254.0 C525.7 256.3 528.0 262.8 530.0 268.0 C532.0 273.2 534.9 279.7 536.5 285.0 C538.1 290.3 538.5 295.1 539.5 300.0 C540.5 304.9 541.5 309.3 542.3 314.5 C543.0 319.7 543.5 325.5 544.0 331.0 C544.5 336.5 545.0 342.0 545.3 347.7 C545.5 353.4 545.5 359.6 545.5 365.0 C545.5 370.4 545.1 373.8 545.0 380.0 C544.9 386.2 544.0 397.2 545.0 402.0 C546.0 406.8 548.5 406.6 551.0 409.0 C553.5 411.4 554.0 413.4 559.7 416.6 C565.4 419.8 576.2 423.9 585.0 428.0 C593.8 432.1 606.7 437.3 612.5 441.5 C618.3 445.7 618.0 448.6 620.0 453.0 C622.0 457.4 623.0 461.8 624.2 468.0 C625.4 474.2 626.3 482.7 627.0 490.0 C627.7 497.3 628.9 505.1 628.6 511.8 C628.3 518.5 626.7 524.1 625.0 530.0 C623.3 535.9 619.4 544.2 618.3 547.0" stroke-width="0.97"/><path d="M428.0 462.0 C426.2 470.0 420.4 494.4 417.0 510.0 C413.6 525.6 409.2 545.0 407.4 555.8 C405.6 566.6 406.2 568.9 406.0 575.0 C405.8 581.1 406.0 589.8 406.0 592.7" stroke-width="0.88"/><path d="M483.6 402.0 C483.6 410.5 483.2 438.3 483.6 453.0 C484.0 467.7 485.0 477.8 486.0 490.0 C487.0 502.2 488.4 514.8 489.4 526.5 C490.4 538.2 491.0 548.5 492.0 560.0 C493.0 571.5 494.8 589.8 495.3 595.7" stroke-width="0.88"/><path d="M499.7 491.3 C501.4 496.1 506.6 510.6 510.0 520.0 C513.4 529.5 516.7 538.0 520.0 548.0 C523.3 558.0 527.3 571.3 530.0 580.0 C532.7 588.7 534.3 594.0 536.3 600.0 C538.3 606.0 541.0 613.3 542.0 616.0" stroke-width="0.88"/><path d="M595.0 523.6 C597.5 526.3 605.2 534.6 610.0 540.0 C614.8 545.4 621.4 550.7 624.0 555.8 C626.6 560.9 626.5 565.4 625.7 570.4 C624.9 575.4 621.2 581.1 619.0 586.0 C616.8 590.9 615.0 596.3 612.5 600.0 C610.0 603.7 606.9 605.8 604.0 608.0 C601.1 610.2 597.7 613.2 595.0 613.2 C592.3 613.2 590.0 609.7 588.0 608.0 C586.0 606.3 585.9 603.3 583.2 603.0 C580.5 602.7 575.4 604.8 572.0 606.0 C568.6 607.2 565.4 608.2 562.7 610.0 C560.0 611.8 558.0 614.8 556.0 617.0 C554.0 619.2 551.8 622.4 551.0 623.5" stroke-width="0.97"/><path d="M568.5 588.0 C569.1 589.2 571.0 593.0 572.0 595.0 C573.0 597.0 574.0 599.2 574.4 600.0" stroke-width="0.88"/><path d="M363.4 591.3 C365.8 593.2 373.1 599.4 378.0 603.0 C382.9 606.6 387.3 610.8 392.7 613.0 C398.1 615.2 407.4 615.5 410.3 616.0" stroke-width="0.88"/><path d="M406.0 609.0 C407.7 607.8 410.9 602.3 416.0 602.0 C421.1 601.7 431.5 605.2 436.7 607.4 C441.9 609.6 443.6 612.1 447.0 615.0 C450.4 617.9 452.9 621.4 457.0 625.0 C461.1 628.6 467.1 635.0 471.8 636.7 C476.5 638.5 480.6 636.0 485.0 635.5 C489.4 635.0 494.9 634.6 498.2 633.8 C501.5 633.0 503.0 631.7 505.0 630.5 C507.0 629.3 509.4 628.8 510.0 626.4 C510.6 624.0 509.7 619.4 508.5 616.0 C507.3 612.6 502.0 607.8 502.6 606.0 C503.2 604.2 508.8 605.0 512.0 605.0 C515.2 605.0 518.1 605.2 521.7 606.0 C525.3 606.8 531.0 607.1 533.4 610.0 C535.8 612.9 534.4 621.2 536.3 623.5 C538.2 625.8 543.5 623.5 545.0 623.5" stroke-width="0.97"/><path d="M471.8 628.0 C472.2 630.8 473.0 639.2 474.0 645.0 C475.0 650.8 476.7 658.0 477.7 663.0 C478.7 668.0 479.0 671.6 480.0 675.0 C481.0 678.4 481.1 681.9 483.6 683.6 C486.1 685.3 491.1 685.0 495.0 685.0 C498.9 685.0 504.3 686.3 507.0 683.6 C509.7 680.9 511.7 674.4 511.4 669.0 C511.1 663.6 507.2 656.9 505.0 651.0 C502.8 645.1 500.0 639.3 498.2 633.8 C496.4 628.3 495.0 623.1 494.0 618.0 C493.0 612.9 492.7 605.5 492.4 603.0" stroke-width="1.32"/><path d="M570.0 590.0 C570.7 591.4 573.7 594.8 574.4 598.6 C575.1 602.4 574.4 608.6 574.4 613.0 C574.4 617.4 576.0 622.0 574.4 625.0 C572.8 628.0 567.9 629.3 565.0 631.0 C562.1 632.7 559.4 634.5 556.8 635.0 C554.2 635.5 551.1 636.0 549.5 633.8 C547.9 631.6 547.8 626.0 547.0 622.0 C546.2 618.0 545.3 612.0 545.0 610.0" stroke-width="1.32"/></g></svg><div class="a" style="left:821px;top:73px;width:15px;height:631px;background:#efefef"></div><div class="sb up" style="left:821px;top:73px"></div><div class="a" style="left:821px;top:293px;width:15px;height:192px;background:#a8a8a8;border:2px solid #5a5a5a;border-radius:2px"></div><div class="sb dn" style="left:821px;top:688px"></div><div class="a" style="left:176px;top:705px;width:645px;height:15px;background:#efefef"></div><div class="sb" style="left:176px;top:705px;width:16px"><div class="a" style="left:3px;top:2px;border-top:4px solid transparent;border-bottom:4px solid transparent;border-right:5px solid #fff"></div></div><div class="a" style="left:387px;top:705px;width:223px;height:15px;background:#a8a8a8;border:2px solid #5a5a5a;border-radius:2px"></div><div class="sb" style="left:805px;top:705px;width:16px"><div class="a" style="left:5px;top:2px;border-top:4px solid transparent;border-bottom:4px solid transparent;border-left:5px solid #fff"></div></div><div class="a" style="left:174px;top:724px;width:158px;height:22px;background:#b6b6fa;border:1px solid #7676e4;border-radius:3px"></div><svg class="a" style="left:178px;top:727px" width="15" height="16"><rect x="0.5" y="0.5" width="14" height="15" fill="#2b6a8a" stroke="#1a3a5a"/><path d="M1 12 Q6 4 14 6 V15 H1Z" fill="#8cc060"/><path d="M3 13 Q8 8 13 10 V14 H3Z" fill="#e8d890"/></svg><div class="t" style="left:196px;top:729px;font-size:12px;--tw:86.6;transform:scaleX(0.843);transform-origin:0 0">新規キャンバス.sai</div><div class="t" style="left:310px;top:730px;font-size:11px;--tw:15;transform:scaleX(0.681);transform-origin:0 0">75%</div><div class="a" style="left:0;top:750px;width:720px;height:1px;background:#f4f6ee"></div><div class="a" style="left:0;top:762px;width:1024px;height:4px;background:#fff"></div><div class="a" style="left:0;top:766px;width:1024px;height:1px;background:#a8b098"></div><div class="a" style="left:0;top:767px;width:1024px;height:1px;background:#eef2d8"></div><div class="t" style="left:677px;top:752px;font-size:11px;--tw:216;transform:scaleX(1.018);transform-origin:0 0">メモリ負荷率:64% (65MB使用/230MB確保)</div><div class="a" style="left:896px;top:752px;width:16px;height:11px;background:#d8d8d8;border-radius:2px"></div><div class="t" style="left:896px;top:753px;width:16px;text-align:center;font-size:9px;font-weight:bold;letter-spacing:-0.5px">Shift</div><div class="a" style="left:914px;top:752px;width:16px;height:11px;background:#d8d8d8;border-radius:2px"></div><div class="t" style="left:914px;top:753px;width:16px;text-align:center;font-size:9px;font-weight:bold;letter-spacing:-0.5px">Ctrl</div><div class="a" style="left:932px;top:752px;width:16px;height:11px;background:#d8d8d8;border-radius:2px"></div><div class="t" style="left:932px;top:753px;width:16px;text-align:center;font-size:9px;font-weight:bold;letter-spacing:-0.5px">Alt</div><div class="a" style="left:950px;top:752px;width:16px;height:11px;background:#d8d8d8;border-radius:2px"></div><div class="t" style="left:950px;top:753px;width:16px;text-align:center;font-size:9px;font-weight:bold;letter-spacing:-0.5px">SPC</div><div class="a" style="left:969px;top:752px;width:14px;height:11px;background:#d8d8d8;border-radius:2px"></div><div class="a" style="left:986px;top:752px;width:16px;height:11px;background:#d8d8d8;border-radius:2px"></div><div class="t" style="left:986px;top:753px;width:16px;text-align:center;font-size:9px;font-weight:bold;letter-spacing:-0.5px">Any</div><div class="a" style="left:1004px;top:752px;width:15px;height:11px;background:#d8d8d8;border-radius:2px"></div><svg class="a" style="left:970px;top:752px" width="13" height="11"><path d="M6.5 0.5 L3.5 3 H9.5Z M6.5 10.5 L3.5 8 H9.5Z M0.5 5.5 L3 2.5 V8.5Z M12.5 5.5 L10 2.5 V8.5Z" fill="#111"/><rect x="4" y="3.5" width="5" height="4" fill="none" stroke="#111"/></svg><svg class="a" style="left:1005px;top:752px" width="13" height="11"><path d="M1.5 10 L2.5 7 L9 0.8 L11.2 3 L4.5 9.2Z" fill="none" stroke="#111" stroke-width="1.1"/></svg><div class="a" style="left:838px;top:71px;width:1px;height:650px;background:#c8c8c8"></div><div class="a" style="left:842px;top:50px;width:21px;height:19px;background:#dcdcfa;border:1px solid #8080ee;border-radius:3px"><div class="a" style="left:3px;top:2px;width:14px;height:14px;border-radius:7px;background:conic-gradient(#ff0,#0f0,#0ff,#00f,#f0f,#f00,#ff0)"><div class="a" style="left:2px;top:2px;width:10px;height:10px;border-radius:5px;background:#dcdcfa"></div></div></div><div class="a" style="left:865px;top:50px;width:21px;height:19px;background:#f9f9f9;border:1px solid #e8e8e8;border-radius:3px"><div class="a" style="left:3px;top:3px;width:14px;height:3px;background:linear-gradient(90deg,#000,#555,#000)"></div><div class="a" style="left:3px;top:8px;width:14px;height:3px;background:#111"></div><div class="a" style="left:3px;top:13px;width:14px;height:3px;background:#111"></div></div><div class="a" style="left:888px;top:50px;width:21px;height:19px;background:#dcdcfa;border:1px solid #8080ee;border-radius:3px"><div class="a" style="left:3px;top:3px;width:15px;height:3px;background:linear-gradient(90deg,#f00,#ff0,#0f0,#0ff,#00f,#f0f)"></div><div class="a" style="left:3px;top:8px;width:15px;height:3px;background:linear-gradient(90deg,#fff,#f00)"></div><div class="a" style="left:3px;top:13px;width:15px;height:3px;background:linear-gradient(90deg,#000,#f00)"></div></div><div class="a" style="left:911px;top:50px;width:21px;height:19px;background:#f9f9f9;border:1px solid #e8e8e8;border-radius:3px"><svg class="a" style="left:1px;top:2px" width="19" height="14"><rect x="1" y="2" width="2" height="2" fill="#888"/><rect x="4" y="2" width="11" height="2" fill="#777"/><rect x="16" y="2" width="2" height="2" fill="#777"/><rect x="1" y="5" width="2" height="2" fill="#777"/><rect x="4" y="5" width="11" height="2" fill="#555"/><rect x="16" y="5" width="2" height="2" fill="#555"/><rect x="1" y="8" width="2" height="2" fill="#999"/><rect x="4" y="8" width="11" height="2" fill="#222"/><rect x="16" y="8" width="2" height="2" fill="#222"/><rect x="1" y="11" width="2" height="2" fill="#aaa"/><rect x="4" y="11" width="11" height="2" fill="#777"/><rect x="16" y="11" width="2" height="2" fill="#777"/></svg></div><div class="a" style="left:934px;top:50px;width:21px;height:19px;background:#f9f9f9;border:1px solid #e8e8e8;border-radius:3px"><svg class="a" style="left:1px;top:2px" width="19" height="14"><rect x="2" y="1" width="2" height="2" fill="#ddd"/><rect x="5" y="1" width="2" height="2" fill="#ddd"/><rect x="8" y="1" width="2" height="2" fill="#ddd"/><rect x="11" y="1" width="2" height="2" fill="#ddd"/><rect x="14" y="1" width="2" height="2" fill="#bbb"/><rect x="17" y="1" width="2" height="2" fill="#ccc"/><rect x="2" y="4" width="2" height="2" fill="#777"/><rect x="5" y="4" width="2" height="2" fill="#aaa"/><rect x="8" y="4" width="2" height="2" fill="#999"/><rect x="11" y="4" width="2" height="2" fill="#999"/><rect x="14" y="4" width="2" height="2" fill="#222"/><rect x="17" y="4" width="2" height="2" fill="#666"/><rect x="2" y="7" width="2" height="2" fill="#444"/><rect x="5" y="7" width="2" height="2" fill="#777"/><rect x="8" y="7" width="2" height="2" fill="#777"/><rect x="11" y="7" width="2" height="2" fill="#666"/><rect x="14" y="7" width="2" height="2" fill="#111"/><rect x="17" y="7" width="2" height="2" fill="#444"/><rect x="2" y="10" width="2" height="2" fill="#111"/><rect x="5" y="10" width="2" height="2" fill="#222"/><rect x="8" y="10" width="2" height="2" fill="#222"/><rect x="11" y="10" width="2" height="2" fill="#222"/><rect x="14" y="10" width="2" height="2" fill="#000"/><rect x="17" y="10" width="2" height="2" fill="#111"/></svg></div><div class="a" style="left:957px;top:50px;width:21px;height:19px;background:#f9f9f9;border:1px solid #e8e8e8;border-radius:3px"><div class="a" style="left:2px;top:2px;width:16px;height:13px;border-radius:3px;background:#fff;border:1px solid #888"><div class="a" style="left:3px;top:2px;width:8px;height:7px;border-radius:4px;background:radial-gradient(circle at 40% 40%,#555,#999 70%,transparent 72%)"></div></div></div><div class="dd" style="left:1004px;top:53px;width:16px;height:16px"></div><div class="a" style="left:848.4px;top:72.3px;width:166.0px;height:166.0px;border-radius:50%;background:#c6c6c6"></div><div class="a" style="left:849.4px;top:73.3px;width:164.0px;height:164.0px;border-radius:50%;background:#fafafa"></div><div class="a" style="left:851.1px;top:75.0px;width:160.6px;height:160.6px;border-radius:50%;background:conic-gradient(#ff0,#0f0,#0ff,#00f,#f0f,#f00,#ff0)"></div><div class="a" style="left:866.9px;top:90.8px;width:129.0px;height:129.0px;border-radius:50%;background:#fafafa"></div><div class="a" style="left:868.2px;top:92.1px;width:126.4px;height:126.4px;border-radius:50%;background:#c6c6c6"></div><div class="a" style="left:869.2px;top:93.1px;width:124.4px;height:124.4px;border-radius:50%;background:#f8f8f8"></div><div class="a" style="left:887px;top:110px;width:89px;height:89px;background:#c0c0c0"></div><div class="a" style="left:888px;top:111px;width:87px;height:87px;background:linear-gradient(to bottom,rgba(0,0,0,0),#000),linear-gradient(to right,#fff,#ffa200)"></div><div class="a" style="left:903px;top:83px;width:9px;height:9px;border-radius:50%;border:2px solid #1f5fe0;background:#f3a000"></div><div class="a" style="left:944px;top:172px;width:9px;height:9px;border-radius:50%;border:2px solid #c8ecf8"></div><div class="t" style="left:844px;top:246px;font-size:12px">H</div><div class="a" style="left:857px;top:245px;width:133px;height:10px;border:1px solid #9a9a9a;border-radius:2px;background:linear-gradient(90deg,#f00,#ff0 17%,#0f0 33%,#0ff 50%,#00f 67%,#f0f 83%,#f00)"></div><svg class="a" style="left:868px;top:255px" width="11" height="7"><path d="M0.5 6.5 L5.5 0.5 L10.5 6.5Z" fill="#fff" stroke="#666"/></svg><div class="t" style="left:992px;top:245px;font-size:12px;letter-spacing:-0.5px;--tw:26;transform:scaleX(0.944);transform-origin:0 0">0:173</div><div class="t" style="left:844px;top:269px;font-size:12px">S</div><div class="a" style="left:857px;top:268px;width:133px;height:10px;border:1px solid #9a9a9a;border-radius:2px;background:linear-gradient(90deg,#3f3f3f,#3f1a00)"></div><svg class="a" style="left:944px;top:278px" width="11" height="7"><path d="M0.5 6.5 L5.5 0.5 L10.5 6.5Z" fill="#fff" stroke="#666"/></svg><div class="t" style="left:992px;top:268px;font-size:12px;letter-spacing:-0.5px;--tw:18;transform:scaleX(0.971);transform-origin:0 0">180</div><div class="t" style="left:844px;top:292px;font-size:12px">V</div><div class="a" style="left:857px;top:291px;width:133px;height:10px;border:1px solid #9a9a9a;border-radius:2px;background:linear-gradient(90deg,#000,#3a1800 25%,#f8c060)"></div><svg class="a" style="left:886px;top:301px" width="11" height="7"><path d="M0.5 6.5 L5.5 0.5 L10.5 6.5Z" fill="#fff" stroke="#666"/></svg><div class="t" style="left:992px;top:291px;font-size:12px;letter-spacing:-0.5px;--tw:18;transform:scaleX(0.971);transform-origin:0 0">063</div><div class="a" style="left:846px;top:314px;width:20px;height:20px;background:#fafafa;border:1px solid #ededed"><div class="a" style="left:3px;top:3px;width:12px;height:12px;border:1.5px dashed #111"></div></div><div class="a" style="left:867px;top:314px;width:20px;height:20px;background:#fafafa;border:1px solid #ededed"><svg class="a" style="left:0;top:1px" width="20" height="18"><ellipse cx="8" cy="6" rx="6.5" ry="3.2" fill="none" stroke="#111" stroke-dasharray="2 1.2"/><path d="M14 6 Q16 10 12 11 Q9 13 13 16" fill="none" stroke="#111"/></svg></div><div class="a" style="left:888px;top:314px;width:20px;height:20px;background:#fafafa;border:1px solid #ededed"><svg class="a" style="left:1px;top:1px" width="18" height="18"><path d="M2 16 L12 6" stroke="#111" stroke-width="2.4"/><path d="M12 2 V4 M14.5 5 H16.5 M15 2.5 L13.7 3.8" stroke="#111"/></svg></div><div class="a" style="left:910px;top:314px;width:20px;height:20px;background:#fafafa;border:1px solid #ededed"></div><div class="a" style="left:932px;top:314px;width:20px;height:20px;background:#fafafa;border:1px solid #ededed"></div><div class="a" style="left:846px;top:336px;width:20px;height:20px;background:#fafafa;border:1px solid #ededed"><svg class="a" style="left:1px;top:1px" width="18" height="18"><path d="M9 1.5 V16.5 M1.5 9 H16.5" stroke="#111" stroke-width="1.8"/><path d="M9 0.5 L6 4 H12Z M9 17.5 L6 14 H12Z M0.5 9 L4 6 V12Z M17.5 9 L14 6 V12Z" fill="#111"/></svg></div><div class="a" style="left:867px;top:336px;width:20px;height:20px;background:#fafafa;border:1px solid #ededed"><svg class="a" style="left:1px;top:1px" width="18" height="18"><circle cx="7" cy="7" r="5" fill="none" stroke="#111" stroke-width="1.8"/><path d="M10.5 10.5 L16 16" stroke="#111" stroke-width="2.4"/></svg></div><div class="a" style="left:888px;top:336px;width:20px;height:20px;background:#fafafa;border:1px solid #ededed"><svg class="a" style="left:1px;top:1px" width="18" height="18"><path d="M5 15 A6.5 6.5 0 1 1 13 15" fill="none" stroke="#111" stroke-width="2.2"/><path d="M2 15 H7 M11 15 H16" stroke="#111" stroke-width="2"/></svg></div><div class="a" style="left:910px;top:336px;width:20px;height:20px;background:#fafafa;border:1px solid #ededed"><svg class="a" style="left:1px;top:0" width="19" height="19"><path d="M4 10 V5 Q4 3.5 5.5 4 V9 V3 Q6 1.5 7.5 2 V8 V2.5 Q8.5 1 10 2 V8 V4 Q11 3 12.5 4 V11 L14 9 Q16 8.5 15.5 10 L12 16 Q10 18 7 17 Q4 16 4 13Z" fill="#fff" stroke="#111"/></svg></div><div class="a" style="left:932px;top:336px;width:20px;height:20px;background:#fafafa;border:1px solid #ededed"><svg class="a" style="left:1px;top:1px" width="18" height="18"><path d="M2 16 L10 8" stroke="#111" stroke-width="1.6"/><path d="M2 16 L9 9" stroke="#fff" stroke-width="0.6"/><path d="M9 6 L12 9 L16 5 Q17 2 14 2Z" fill="#111"/></svg></div><div class="a" style="left:991px;top:328px;width:28px;height:28px;background:#f5e8b6;border:1px solid #777"></div><div class="a" style="left:975px;top:312px;width:28px;height:28px;background:#421500;border:1px solid #777;box-shadow:inset 0 0 0 1px #fff"></div><svg class="a" style="left:1004px;top:313px" width="15" height="14"><path d="M3 3 Q10 2 11 10" fill="none" stroke="#111" stroke-width="1.4"/><path d="M1 3 L5 0.5 V5.5Z M8 9 H14 L11 13Z" fill="#111"/></svg><div class="a" style="left:976px;top:345px;width:10px;height:10px;background:#fff;border:1px solid #888"><div class="a" style="left:4px;top:0;width:4px;height:4px;background:#aaa"></div><div class="a" style="left:0;top:4px;width:4px;height:4px;background:#aaa"></div></div><div class="a" style="left:842px;top:362px;width:178px;height:98px;border:1px solid #bcbcbc;background:#efefef;border-radius:2px"></div><div class="a" style="left:844px;top:364px;width:39px;height:31px;background:#d6d6fc;border:1px solid #6e6ee8;"><div class="t" style="left:1px;top:2px;font-size:10px;letter-spacing:-0.5px;--tw:20;transform:scaleX(1.053);transform-origin:0 0">鉛筆</div><svg class="a" style="right:2px;bottom:2px" width="18" height="16"><path d="M2 15 L3.5 11 L14 1 L17 4 L6.5 14Z" fill="#fff" stroke="#111" stroke-width="1.1"/><path d="M2 15 L3.5 11 L6.5 14Z" fill="#111"/></svg></div><div class="a" style="left:883px;top:364px;width:40px;height:31px;background:#fff;border-right:1px solid #e8e8e8;border-bottom:1px solid #e8e8e8;"><div class="t" style="left:1px;top:2px;font-size:10px;letter-spacing:-0.5px;--tw:32;transform:scaleX(1.164);transform-origin:0 0">ｴｱﾌﾞﾗｼ</div><svg class="a" style="right:2px;bottom:2px" width="20" height="16"><path d="M2 13 Q8 6 16 3 M5 14 L18 11 M8 6 L14 13" fill="none" stroke="#111" stroke-width="1.2"/></svg></div><div class="a" style="left:923px;top:364px;width:40px;height:31px;background:#fff;border-right:1px solid #e8e8e8;border-bottom:1px solid #e8e8e8;"><div class="t" style="left:1px;top:2px;font-size:10px;letter-spacing:-0.5px;--tw:9.5;transform:scaleX(1.000);transform-origin:0 0">筆</div><svg class="a" style="right:2px;bottom:2px" width="18" height="16"><path d="M2 15 L12 4" stroke="#111" stroke-width="2.6" stroke-linecap="round"/><path d="M11 5 L16 1" stroke="#111" stroke-width="1.4"/></svg></div><div class="a" style="left:963px;top:364px;width:39px;height:31px;background:#fff;border-right:1px solid #e8e8e8;border-bottom:1px solid #e8e8e8;"><div class="t" style="left:1px;top:2px;font-size:10px;letter-spacing:-0.5px;--tw:28.5;transform:scaleX(1.000);transform-origin:0 0">水彩筆</div><svg class="a" style="right:1px;bottom:2px" width="20" height="16"><path d="M2 15 L12 4" stroke="#111" stroke-width="2.6" stroke-linecap="round"/><path d="M11 5 L16 1" stroke="#111" stroke-width="1.4"/><path d="M15 8 Q12 12 13 14 Q15 16 17 14 Q18 12 15 8Z" fill="#aaa"/></svg></div><div class="a" style="left:844px;top:395px;width:39px;height:32px;background:#fff;border-right:1px solid #e8e8e8;border-bottom:1px solid #e8e8e8;"><div class="t" style="left:1px;top:2px;font-size:10px;letter-spacing:-0.5px;--tw:30;transform:scaleX(0.789);transform-origin:0 0">マーカー</div><svg class="a" style="right:2px;bottom:2px" width="18" height="16"><path d="M2 15 L3.5 11 L14 1 L17 4 L6.5 14Z" fill="#fff" stroke="#111" stroke-width="1.1"/><path d="M2 15 L3.5 11 L6.5 14Z" fill="#111"/></svg></div><div class="a" style="left:883px;top:395px;width:40px;height:32px;background:#fff;border-right:1px solid #e8e8e8;border-bottom:1px solid #e8e8e8;"><div class="t" style="left:1px;top:2px;font-size:10px;letter-spacing:-0.5px;--tw:32.5;transform:scaleX(0.985);transform-origin:0 0">消しｺﾞﾑ</div><svg class="a" style="right:2px;bottom:2px" width="18" height="16"><path d="M1 10 L10 2 L17 7 L8 15Z" fill="#888" stroke="#111"/><path d="M1 10 L5 7 L12 12 L8 15Z" fill="#eee" stroke="#111"/></svg></div><div class="a" style="left:923px;top:395px;width:40px;height:32px;background:#fff;border-right:1px solid #e8e8e8;border-bottom:1px solid #e8e8e8;"><div class="t" style="left:1px;top:2px;font-size:10px;letter-spacing:-0.5px;--tw:34;transform:scaleX(1.030);transform-origin:0 0">選択ﾍﾟﾝ</div><svg class="a" style="right:2px;bottom:1px" width="18" height="17"><rect x="1.5" y="1.5" width="15" height="14" fill="none" stroke="#111" stroke-dasharray="2 1.5" rx="3"/><path d="M4 15 L14 4 L16 6 L6 16Z" fill="#ccc" stroke="#111" stroke-width="0.8"/><text x="3" y="9" font-size="7" font-family="Liberation Sans">S</text></svg></div><div class="a" style="left:963px;top:395px;width:39px;height:32px;background:#fff;border-right:1px solid #e8e8e8;border-bottom:1px solid #e8e8e8;"><div class="t" style="left:1px;top:2px;font-size:10px;letter-spacing:-0.5px;--tw:35;transform:scaleX(0.921);transform-origin:0 0">選択消し</div><svg class="a" style="right:2px;bottom:1px" width="18" height="17"><rect x="1.5" y="1.5" width="15" height="14" fill="none" stroke="#111" stroke-dasharray="2 1.5" rx="3"/><path d="M3 11 L10 4 L16 8 L9 15Z" fill="#999" stroke="#111" stroke-width="0.8"/><text x="3" y="9" font-size="7" font-family="Liberation Sans">S</text></svg></div><div class="a" style="left:844px;top:427px;width:39px;height:31px;background:#fff;border-right:1px solid #e8e8e8;border-bottom:1px solid #e8e8e8;"><div class="t" style="left:1px;top:2px;font-size:10px;letter-spacing:-0.5px;--tw:22;transform:scaleX(1.189);transform-origin:0 0">ﾊﾞｹﾂ</div><svg class="a" style="right:2px;bottom:1px" width="19" height="18"><path d="M3.7 10.7 L12.2 1.8 L17.7 10.7 L11.5 16.5Z" fill="#888" stroke="#111" stroke-width="1.1"/><path d="M5.5 10.5 L12 4 L15.5 10.5 L11 14Z" fill="#aaa"/><path d="M12.6 1.5 Q15.5 0.5 17 7.5" fill="none" stroke="#111" stroke-width="1.1"/><path d="M3.5 11 L2.5 17 M2 17.3 H8.5" stroke="#777" stroke-width="1.3"/></svg></div><div class="a" style="left:883px;top:427px;width:40px;height:31px;background:#fff;border-right:1px solid #e8e8e8;border-bottom:1px solid #e8e8e8;"><div class="t" style="left:1px;top:2px;font-size:10px;letter-spacing:-0.5px;--tw:31.5;transform:scaleX(1.103);transform-origin:0 0">2値ﾍﾟﾝ</div><svg class="a" style="right:2px;bottom:2px" width="18" height="16"><path d="M2 15 L3.5 11 L14 1 L17 4 L6.5 14Z" fill="#fff" stroke="#111" stroke-width="1.1"/><path d="M2 15 L3.5 11 L6.5 14Z" fill="#111"/></svg></div><div class="a" style="left:923px;top:427px;width:40px;height:31px;background:#eeeeee;border-right:1px solid #e0e0e0"></div><div class="a" style="left:963px;top:427px;width:39px;height:31px;background:#eeeeee;border-right:1px solid #e0e0e0"></div><div class="a" style="left:1003px;top:364px;width:16px;height:95px;background:#efefef"></div><div class="sb up" style="left:1003px;top:364px;width:16px;height:16px"></div><div class="a" style="left:1003px;top:382px;width:16px;height:8px;background:#a8a8a8;border:2px solid #5a5a5a;border-radius:2px"></div><div class="sb dn" style="left:1003px;top:443px;width:16px;height:16px"></div><div class="a" style="left:842px;top:465px;width:178px;height:1px;background:#e0e0e0"></div><div class="a" style="left:923px;top:464px;width:15px;height:3px;background:#8a8a8a;border-radius:2px"></div><div class="field" style="left:842px;top:470px;width:99px;height:18px"></div><div class="t" style="left:848px;top:474px;font-size:12px;--tw:23.4;transform:scaleX(0.975);transform-origin:0 0">通常</div><div class="dd" style="left:924px;top:472px"></div><div class="field" style="left:945px;top:470px;width:74px;height:18px"></div><svg class="a" style="left:946px;top:471px" width="72" height="16"><path d="M2 13 Q7 3 10 3 Q13 3 17 13Z M20 13 Q21 4 27 4 Q33 4 35 13Z M38 13 L39 5 Q44 3 50 5 L53 13Z" fill="#111"/><rect x="55.5" y="0.5" width="16" height="15" fill="#fff" stroke="#6e6ee8"/><rect x="57" y="4" width="13" height="9" fill="#111"/></svg><div class="t" style="left:842px;top:498px;font-size:12px;--tw:55;transform:scaleX(0.764);transform-origin:0 0">ブラシサイズ</div><div class="dd" style="left:900px;top:498px;width:13px;height:11px"></div><div class="field" style="left:916px;top:495px;width:103px;height:15px"></div><div class="t" style="left:922px;top:498px;font-size:11px;--tw:21;transform:scaleX(0.967);transform-origin:0 0">×1.0</div><div class="t" style="left:994px;top:498px;font-size:11px;letter-spacing:1px;--tw:17.6;transform:scaleX(0.962);transform-origin:0 0">2.0</div><div class="t" style="left:842px;top:515px;font-size:12px;--tw:51.5;transform:scaleX(0.858);transform-origin:0 0">最小サイズ</div><div class="field" style="left:916px;top:514px;width:84px;height:14px"></div><div class="t" style="left:983px;top:516px;font-size:11px;--tw:11.7;transform:scaleX(0.736);transform-origin:0 0">0%</div><div class="t" style="left:842px;top:537px;font-size:12px;--tw:50;transform:scaleX(0.833);transform-origin:0 0">ブラシ濃度</div><div class="field" style="left:916px;top:535px;width:103px;height:15px;background:#bcbcbc"></div><div class="t" style="left:996px;top:538px;font-size:11px;--tw:17.6;transform:scaleX(0.959);transform-origin:0 0">100</div><div class="field" style="left:842px;top:558px;width:119px;height:18px"></div><div class="t" style="left:846px;top:561px;font-size:12px;--tw:71.5;transform:scaleX(0.851);transform-origin:0 0">【通常の円形】</div><div class="dd" style="left:945px;top:560px"></div><div class="field" style="left:966px;top:559px;width:53px;height:17px;border-color:#dcdcdc"></div><div class="t" style="left:968px;top:563px;font-size:10px;color:#bbb;--tw:16.4;transform:scaleX(0.820);transform-origin:0 0">強さ</div><div class="t" style="left:1002px;top:562px;font-size:11px;color:#bbb;--tw:12;transform:scaleX(0.980);transform-origin:0 0">50</div><div class="field" style="left:842px;top:580px;width:119px;height:18px"></div><div class="t" style="left:846px;top:583px;font-size:12px;--tw:76;transform:scaleX(0.704);transform-origin:0 0">【テクスチャなし】</div><div class="dd" style="left:945px;top:582px"></div><div class="field" style="left:966px;top:581px;width:53px;height:17px;border-color:#dcdcdc"></div><div class="t" style="left:968px;top:585px;font-size:10px;color:#bbb;--tw:16.4;transform:scaleX(0.820);transform-origin:0 0">強さ</div><div class="t" style="left:1002px;top:584px;font-size:11px;color:#bbb;--tw:12;transform:scaleX(0.980);transform-origin:0 0">35</div><div class="plus" style="left:842px;top:605px"></div><div class="t" style="left:858px;top:605px;font-size:12px;--tw:47;transform:scaleX(0.979);transform-origin:0 0">詳細設定</div><div class="a" style="left:842px;top:622px;width:178px;height:130px;border:1px solid #bcbcbc;background:#fff;overflow:hidden"><div class="a" style="left:1px;top:1px;width:31px;height:32px;border-right:1px solid #e4e4e4;border-bottom:1px solid #e4e4e4;"><div class="a" style="left:14.9px;top:10.4px;width:1.2px;height:1.2px;border-radius:50%;background:#000"></div><div class="t" style="left:0;top:21px;width:31px;text-align:center;font-size:10px;letter-spacing:1px">0.7</div></div><div class="a" style="left:32px;top:1px;width:32px;height:32px;border-right:1px solid #e4e4e4;border-bottom:1px solid #e4e4e4;"><div class="a" style="left:15.4px;top:10.4px;width:1.2px;height:1.2px;border-radius:50%;background:#000"></div><div class="t" style="left:0;top:21px;width:32px;text-align:center;font-size:10px;letter-spacing:1px">0.8</div></div><div class="a" style="left:64px;top:1px;width:32px;height:32px;border-right:1px solid #e4e4e4;border-bottom:1px solid #e4e4e4;"><div class="a" style="left:15.3px;top:10.3px;width:1.4px;height:1.4px;border-radius:50%;background:#000"></div><div class="t" style="left:0;top:21px;width:32px;text-align:center;font-size:10px;letter-spacing:1px">1</div></div><div class="a" style="left:96px;top:1px;width:32px;height:32px;border-right:1px solid #e4e4e4;border-bottom:1px solid #e4e4e4;"><div class="a" style="left:15.2px;top:10.2px;width:1.6px;height:1.6px;border-radius:50%;background:#000"></div><div class="t" style="left:0;top:21px;width:32px;text-align:center;font-size:10px;letter-spacing:1px">1.5</div></div><div class="a" style="left:128px;top:1px;width:32px;height:32px;background:#dcdcfc;box-shadow:inset 0 0 0 1px #7070e8;"><div class="a" style="left:15.1px;top:10.1px;width:1.8px;height:1.8px;border-radius:50%;background:#000"></div><div class="t" style="left:0;top:21px;width:32px;text-align:center;font-size:10px;letter-spacing:1px">2</div></div><div class="a" style="left:1px;top:33px;width:31px;height:32px;border-right:1px solid #e4e4e4;border-bottom:1px solid #e4e4e4;"><div class="a" style="left:14.5px;top:10px;width:2px;height:2px;border-radius:50%;background:#000"></div><div class="t" style="left:0;top:21px;width:31px;text-align:center;font-size:10px;letter-spacing:1px">2.3</div></div><div class="a" style="left:32px;top:33px;width:32px;height:32px;border-right:1px solid #e4e4e4;border-bottom:1px solid #e4e4e4;"><div class="a" style="left:14.9px;top:9.9px;width:2.2px;height:2.2px;border-radius:50%;background:#000"></div><div class="t" style="left:0;top:21px;width:32px;text-align:center;font-size:10px;letter-spacing:1px">2.6</div></div><div class="a" style="left:64px;top:33px;width:32px;height:32px;border-right:1px solid #e4e4e4;border-bottom:1px solid #e4e4e4;"><div class="a" style="left:14.7px;top:9.7px;width:2.6px;height:2.6px;border-radius:50%;background:#000"></div><div class="t" style="left:0;top:21px;width:32px;text-align:center;font-size:10px;letter-spacing:1px">3</div></div><div class="a" style="left:96px;top:33px;width:32px;height:32px;border-right:1px solid #e4e4e4;border-bottom:1px solid #e4e4e4;"><div class="a" style="left:14.5px;top:9.5px;width:3.0px;height:3.0px;border-radius:50%;background:#000"></div><div class="t" style="left:0;top:21px;width:32px;text-align:center;font-size:10px;letter-spacing:1px">3.5</div></div><div class="a" style="left:128px;top:33px;width:32px;height:32px;border-right:1px solid #e4e4e4;border-bottom:1px solid #e4e4e4;"><div class="a" style="left:14.2px;top:9.2px;width:3.6px;height:3.6px;border-radius:50%;background:#000"></div><div class="t" style="left:0;top:21px;width:32px;text-align:center;font-size:10px;letter-spacing:1px">4</div></div><div class="a" style="left:1px;top:65px;width:31px;height:32px;border-right:1px solid #e4e4e4;border-bottom:1px solid #e4e4e4;"><div class="a" style="left:13.75px;top:9.25px;width:3.5px;height:3.5px;border-radius:50%;background:#000"></div><div class="t" style="left:0;top:21px;width:31px;text-align:center;font-size:10px;letter-spacing:1px">5</div></div><div class="a" style="left:32px;top:65px;width:32px;height:32px;border-right:1px solid #e4e4e4;border-bottom:1px solid #e4e4e4;"><div class="a" style="left:13.8px;top:8.8px;width:4.4px;height:4.4px;border-radius:50%;background:#000"></div><div class="t" style="left:0;top:21px;width:32px;text-align:center;font-size:10px;letter-spacing:1px">6</div></div><div class="a" style="left:64px;top:65px;width:32px;height:32px;border-right:1px solid #e4e4e4;border-bottom:1px solid #e4e4e4;"><div class="a" style="left:13.2px;top:8.2px;width:5.6px;height:5.6px;border-radius:50%;background:#000"></div><div class="t" style="left:0;top:21px;width:32px;text-align:center;font-size:10px;letter-spacing:1px">7</div></div><div class="a" style="left:96px;top:65px;width:32px;height:32px;border-right:1px solid #e4e4e4;border-bottom:1px solid #e4e4e4;"><div class="a" style="left:12.65px;top:7.65px;width:6.7px;height:6.7px;border-radius:50%;background:#000"></div><div class="t" style="left:0;top:21px;width:32px;text-align:center;font-size:10px;letter-spacing:1px">8</div></div><div class="a" style="left:128px;top:65px;width:32px;height:32px;border-right:1px solid #e4e4e4;border-bottom:1px solid #e4e4e4;"><div class="a" style="left:12.15px;top:7.15px;width:7.7px;height:7.7px;border-radius:50%;background:#000"></div><div class="t" style="left:0;top:21px;width:32px;text-align:center;font-size:10px;letter-spacing:1px">9</div></div><div class="a" style="left:1px;top:97px;width:31px;height:32px;border-right:1px solid #e4e4e4;border-bottom:1px solid #e4e4e4;"><div class="a" style="left:11.1px;top:6.6px;width:8.8px;height:8.8px;border-radius:50%;background:#000"></div><div class="t" style="left:0;top:21px;width:31px;text-align:center;font-size:10px;letter-spacing:1px">10</div></div><div class="a" style="left:32px;top:97px;width:32px;height:32px;border-right:1px solid #e4e4e4;border-bottom:1px solid #e4e4e4;"><div class="a" style="left:10.3px;top:5.3px;width:11.4px;height:11.4px;border-radius:50%;background:#000"></div><div class="t" style="left:0;top:21px;width:32px;text-align:center;font-size:10px;letter-spacing:1px">12</div></div><div class="a" style="left:64px;top:97px;width:32px;height:32px;border-right:1px solid #e4e4e4;border-bottom:1px solid #e4e4e4;"><div class="a" style="left:9.4px;top:4.4px;width:13.2px;height:13.2px;border-radius:50%;background:#000"></div><div class="t" style="left:0;top:21px;width:32px;text-align:center;font-size:10px;letter-spacing:1px">14</div></div><div class="a" style="left:96px;top:97px;width:32px;height:32px;border-right:1px solid #e4e4e4;border-bottom:1px solid #e4e4e4;"><div class="a" style="left:8.5px;top:3.5px;width:15.0px;height:15.0px;border-radius:50%;background:#000"></div><div class="t" style="left:0;top:21px;width:32px;text-align:center;font-size:10px;letter-spacing:1px">16</div></div><div class="a" style="left:128px;top:97px;width:32px;height:32px;border-right:1px solid #e4e4e4;border-bottom:1px solid #e4e4e4;"><div class="a" style="left:6.800000000000001px;top:1.8000000000000007px;width:18.4px;height:18.4px;border-radius:50%;background:#000"></div><div class="t" style="left:0;top:21px;width:32px;text-align:center;font-size:10px;letter-spacing:1px">20</div></div></div><div class="a" style="left:1004px;top:623px;width:15px;height:128px;background:#efefef"></div><div class="sb up" style="left:1004px;top:624px"></div><div class="a" style="left:1004px;top:641px;width:15px;height:38px;background:#a8a8a8;border:2px solid #5a5a5a;border-radius:2px"></div><div class="sb dn" style="left:1004px;top:728px"></div><div class="a" style="left:720px;top:732px;width:300px;height:20px;background:#000"></div><svg class="a" style="left:725px;top:735px" width="14" height="14"><rect x="1" y="4" width="8" height="8" fill="none" stroke="#ff0" stroke-width="1.3"/><rect x="4" y="1" width="8" height="8" fill="none" stroke="#ff0" stroke-width="1.3"/></svg><div class="t" style="left:745px;top:736px;font-size:12px;color:#ff0;--tw:47.6;transform:scaleX(0.903);transform-origin:0 0">1024x768</div><div class="t" style="left:832px;top:736px;font-size:12px;color:#ff0;--tw:61;transform:scaleX(0.726);transform-origin:0 0">フルスクリーン</div><div class="a" style="left:950px;top:733px;width:20px;height:18px;border:1.5px solid #ff0"></div><svg class="a" style="left:952px;top:735px" width="16" height="14"><path d="M1 4 H4 L6 2 H10 L12 4 H15 V13 H1Z" fill="#ff0"/><circle cx="8" cy="8.5" r="2.8" fill="#000"/></svg><div class="a" style="left:977px;top:737px;width:10px;height:10px;border-radius:5px;background:#ff0"></div><div class="t" style="left:990px;top:736px;font-size:13px;color:#ff0;--tw:24.6;transform:scaleX(0.896);transform-origin:0 0">REC</div><script>(function(){var L=document.querySelectorAll(".t");for(var i=0;i<L.length;i++){var e=L[i];var tw=parseFloat(getComputedStyle(e).getPropertyValue("--tw"));if(!tw)continue;var old=e.style.transform;e.style.transform="none";var r=document.createRange();r.selectNodeContents(e);var w=r.getBoundingClientRect().width;e.style.transform=(w>0)?"scaleX("+(tw/w)+")":old;}})();</script></body></html>
